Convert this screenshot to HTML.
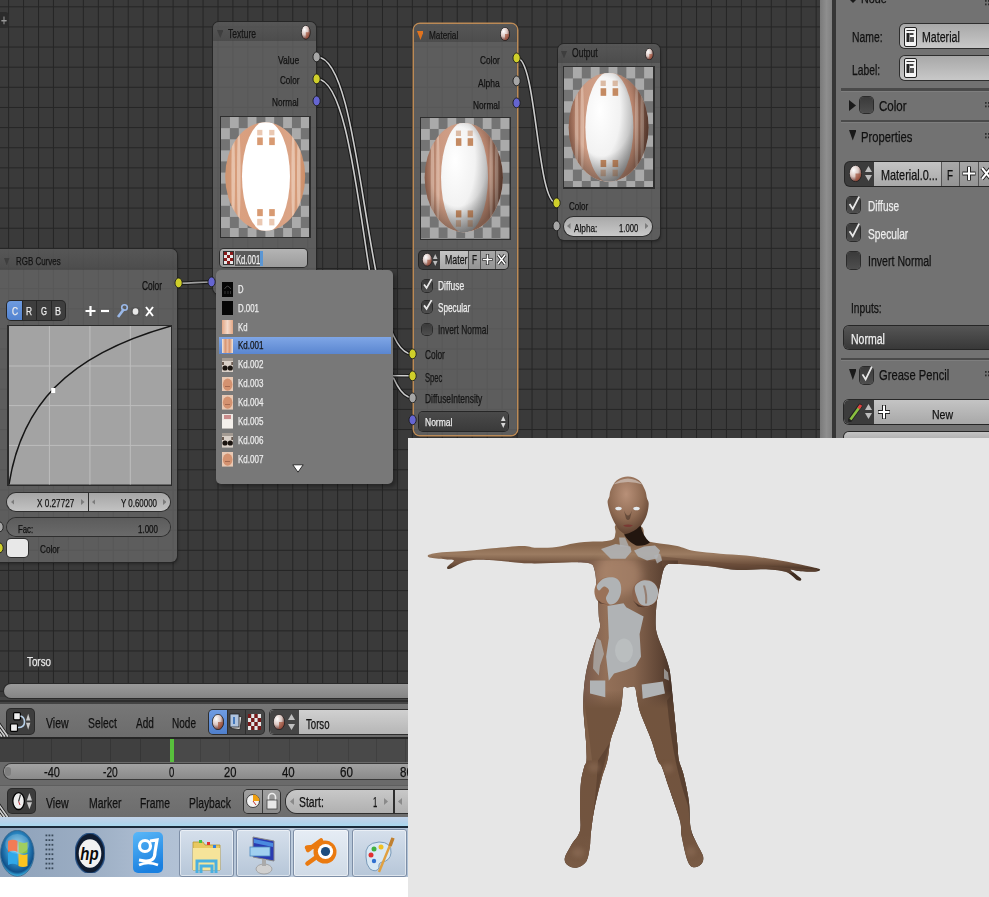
<!DOCTYPE html><html><head><meta charset="utf-8"><style>html,body{margin:0;padding:0}body{width:989px;height:897px;position:relative;overflow:hidden;background:#fff;font-family:"Liberation Sans",sans-serif}.a{position:absolute}.t{position:absolute;white-space:nowrap;transform-origin:0 0;-webkit-text-stroke:0.25px currentColor}</style></head><body>
<svg class="a" style="left:0px;top:0px;" width="830" height="701" viewBox="0 0 830 701"><rect width="830" height="701" fill="#3a3a3a"/><rect x="8.10" y="0" width="1.0" height="701" fill="#262626"/><rect x="23.05" y="0" width="1.0" height="701" fill="#262626"/><rect x="38.01" y="0" width="1.0" height="701" fill="#262626"/><rect x="52.96" y="0" width="1.0" height="701" fill="#262626"/><rect x="67.92" y="0" width="1.0" height="701" fill="#262626"/><rect x="82.88" y="0" width="1.0" height="701" fill="#262626"/><rect x="97.83" y="0" width="1.0" height="701" fill="#262626"/><rect x="112.78" y="0" width="1.0" height="701" fill="#262626"/><rect x="127.74" y="0" width="1.0" height="701" fill="#262626"/><rect x="142.70" y="0" width="1.0" height="701" fill="#262626"/><rect x="157.65" y="0" width="1.0" height="701" fill="#262626"/><rect x="172.61" y="0" width="1.0" height="701" fill="#262626"/><rect x="187.56" y="0" width="1.0" height="701" fill="#262626"/><rect x="202.52" y="0" width="1.0" height="701" fill="#262626"/><rect x="217.47" y="0" width="1.0" height="701" fill="#262626"/><rect x="232.43" y="0" width="1.0" height="701" fill="#262626"/><rect x="247.38" y="0" width="1.0" height="701" fill="#262626"/><rect x="262.34" y="0" width="1.0" height="701" fill="#262626"/><rect x="277.29" y="0" width="1.0" height="701" fill="#262626"/><rect x="292.25" y="0" width="1.0" height="701" fill="#262626"/><rect x="307.20" y="0" width="1.0" height="701" fill="#262626"/><rect x="322.16" y="0" width="1.0" height="701" fill="#262626"/><rect x="337.11" y="0" width="1.0" height="701" fill="#262626"/><rect x="352.06" y="0" width="1.0" height="701" fill="#262626"/><rect x="367.02" y="0" width="1.0" height="701" fill="#262626"/><rect x="381.97" y="0" width="1.0" height="701" fill="#262626"/><rect x="396.93" y="0" width="1.0" height="701" fill="#262626"/><rect x="411.88" y="0" width="1.0" height="701" fill="#262626"/><rect x="426.84" y="0" width="1.0" height="701" fill="#262626"/><rect x="441.79" y="0" width="1.0" height="701" fill="#262626"/><rect x="456.75" y="0" width="1.0" height="701" fill="#262626"/><rect x="471.70" y="0" width="1.0" height="701" fill="#262626"/><rect x="486.66" y="0" width="1.0" height="701" fill="#262626"/><rect x="501.61" y="0" width="1.0" height="701" fill="#262626"/><rect x="516.57" y="0" width="1.0" height="701" fill="#262626"/><rect x="531.52" y="0" width="1.0" height="701" fill="#262626"/><rect x="546.48" y="0" width="1.0" height="701" fill="#262626"/><rect x="561.43" y="0" width="1.0" height="701" fill="#262626"/><rect x="576.39" y="0" width="1.0" height="701" fill="#262626"/><rect x="591.35" y="0" width="1.0" height="701" fill="#262626"/><rect x="606.30" y="0" width="1.0" height="701" fill="#262626"/><rect x="621.26" y="0" width="1.0" height="701" fill="#262626"/><rect x="636.21" y="0" width="1.0" height="701" fill="#262626"/><rect x="651.17" y="0" width="1.0" height="701" fill="#262626"/><rect x="666.12" y="0" width="1.0" height="701" fill="#262626"/><rect x="681.08" y="0" width="1.0" height="701" fill="#262626"/><rect x="696.03" y="0" width="1.0" height="701" fill="#262626"/><rect x="710.99" y="0" width="1.0" height="701" fill="#262626"/><rect x="725.94" y="0" width="1.0" height="701" fill="#262626"/><rect x="740.90" y="0" width="1.0" height="701" fill="#262626"/><rect x="755.85" y="0" width="1.0" height="701" fill="#262626"/><rect x="770.81" y="0" width="1.0" height="701" fill="#262626"/><rect x="785.76" y="0" width="1.0" height="701" fill="#262626"/><rect x="800.72" y="0" width="1.0" height="701" fill="#262626"/><rect x="815.67" y="0" width="1.0" height="701" fill="#262626"/><rect x="0" y="6.30" width="830" height="1.0" fill="#262626"/><rect x="0" y="26.43" width="830" height="1.0" fill="#262626"/><rect x="0" y="46.56" width="830" height="1.0" fill="#262626"/><rect x="0" y="66.69" width="830" height="1.0" fill="#262626"/><rect x="0" y="86.82" width="830" height="1.0" fill="#262626"/><rect x="0" y="106.95" width="830" height="1.0" fill="#262626"/><rect x="0" y="127.08" width="830" height="1.0" fill="#262626"/><rect x="0" y="147.21" width="830" height="1.0" fill="#262626"/><rect x="0" y="167.34" width="830" height="1.0" fill="#262626"/><rect x="0" y="187.47" width="830" height="1.0" fill="#262626"/><rect x="0" y="207.60" width="830" height="1.0" fill="#262626"/><rect x="0" y="227.73" width="830" height="1.0" fill="#262626"/><rect x="0" y="247.86" width="830" height="1.0" fill="#262626"/><rect x="0" y="267.99" width="830" height="1.0" fill="#262626"/><rect x="0" y="288.12" width="830" height="1.0" fill="#262626"/><rect x="0" y="308.25" width="830" height="1.0" fill="#262626"/><rect x="0" y="328.38" width="830" height="1.0" fill="#262626"/><rect x="0" y="348.51" width="830" height="1.0" fill="#262626"/><rect x="0" y="368.64" width="830" height="1.0" fill="#262626"/><rect x="0" y="388.77" width="830" height="1.0" fill="#262626"/><rect x="0" y="408.90" width="830" height="1.0" fill="#262626"/><rect x="0" y="429.03" width="830" height="1.0" fill="#262626"/><rect x="0" y="449.16" width="830" height="1.0" fill="#262626"/><rect x="0" y="469.29" width="830" height="1.0" fill="#262626"/><rect x="0" y="489.42" width="830" height="1.0" fill="#262626"/><rect x="0" y="509.55" width="830" height="1.0" fill="#262626"/><rect x="0" y="529.68" width="830" height="1.0" fill="#262626"/><rect x="0" y="549.81" width="830" height="1.0" fill="#262626"/><rect x="0" y="569.94" width="830" height="1.0" fill="#262626"/><rect x="0" y="590.07" width="830" height="1.0" fill="#262626"/><rect x="0" y="610.20" width="830" height="1.0" fill="#262626"/><rect x="0" y="630.33" width="830" height="1.0" fill="#262626"/><rect x="0" y="650.46" width="830" height="1.0" fill="#262626"/><rect x="0" y="670.59" width="830" height="1.0" fill="#262626"/><rect x="0" y="690.72" width="830" height="1.0" fill="#262626"/></svg>
<div class="a" style="left:0px;top:12px;width:9px;height:16px;background:#2b2b2b;border-radius:0 4px 4px 0"></div>
<div class="t" style="left:1.00px;top:13.29px;font-size:14.53px;line-height:14.53px;color:#9a9a9a;transform:scaleX(0.7056);">+</div>
<svg class="a" style="left:0px;top:0px;" width="830" height="701" viewBox="0 0 830 701"><path d="M317,57 C364.5,57 364.5,354 412,354" stroke="#161616" stroke-width="3.8" fill="none" opacity="0.9"/><path d="M317,79 C364.5,79 364.5,397.5 412,397.5" stroke="#161616" stroke-width="3.8" fill="none" opacity="0.9"/><path d="M178.5,283.3 C195.25,283.3 195.25,282 212,282" stroke="#161616" stroke-width="3.8" fill="none" opacity="0.9"/><path d="M517,58 C536.7,58 536.7,203.3 556.4,203.3" stroke="#161616" stroke-width="3.8" fill="none" opacity="0.9"/><path d="M317,57 C364.5,57 364.5,354 412,354" stroke="#cccccc" stroke-width="1.6" fill="none"/><path d="M317,79 C364.5,79 364.5,397.5 412,397.5" stroke="#cccccc" stroke-width="1.6" fill="none"/><path d="M178.5,283.3 C195.25,283.3 195.25,282 212,282" stroke="#a0a0a0" stroke-width="1.6" fill="none"/><path d="M517,58 C536.7,58 536.7,203.3 556.4,203.3" stroke="#cccccc" stroke-width="1.6" fill="none"/><path d="M360,375.5 L412,375.7" stroke="#1e1e1e" stroke-width="3.4" fill="none"/><path d="M360,375.5 L412,375.7" stroke="#cfcfcf" stroke-width="1.6" fill="none"/></svg>
<div class="a" style="left:213px;top:22px;width:103px;height:272px;background:rgba(104,104,104,0.76);border-radius:6px;box-shadow:0 0 0 1px #262626,1px 2px 3px rgba(0,0,0,0.3)"></div>
<div class="a" style="left:213px;top:22px;width:103px;height:19px;background:linear-gradient(rgba(80,80,80,0.5),rgba(60,60,60,0.5));border-radius:6px 6px 0 0"></div>
<svg class="a" style="left:216.5px;top:29.5px;" width="6.5" height="8.0" viewBox="0 0 6.5 8.0"><polygon points="0,0 6.5,0 3.25,8.0" fill="#3e3e3e"/></svg>
<div class="t" style="left:228.00px;top:27.57px;font-size:12.79px;line-height:12.79px;color:#141414;transform:scaleX(0.6674);">Texture</div>
<svg class="a" style="left:301px;top:25.3px;" width="9.600000000000023" height="14.599999999999998" viewBox="0 0 9.600000000000023 14.599999999999998"><defs><radialGradient id="sg30125" cx="35%" cy="30%" r="70%"><stop offset="0" stop-color="#ffffff"/><stop offset="0.55" stop-color="#d9c5c0"/><stop offset="1" stop-color="#6d3a33"/></radialGradient></defs><ellipse cx="4.800000000000011" cy="7.299999999999999" rx="4.5000000000000115" ry="6.999999999999999" fill="url(#sg30125)" stroke="#222" stroke-width="0.8"/><path d="M4.800000000000011,7.299999999999999 L8.600000000000023,7.299999999999999 A3.8000000000000114,6.299999999999999 0 0 1 4.800000000000011,13.599999999999998 Z" fill="#a4553f" opacity="0.7"/></svg>
<div class="t" style="left:277.80px;top:53.75px;font-size:11.63px;line-height:11.63px;color:#111;transform:scaleX(0.7337);">Value</div>
<div class="t" style="left:279.60px;top:75.08px;font-size:11.48px;line-height:11.48px;color:#111;transform:scaleX(0.7069);">Color</div>
<div class="t" style="left:272.40px;top:97.48px;font-size:11.48px;line-height:11.48px;color:#111;transform:scaleX(0.7183);">Normal</div>
<div class="a" style="left:219.60000000000002px;top:115.5px;width:91.1px;height:122.7px;background:#2e2e2e"></div>
<svg class="a" style="left:220.8px;top:116.7px;" width="88.69999999999999" height="120.3" viewBox="0 0 88.69999999999999 120.3"><rect width="88.69999999999999" height="120.3" fill="#aaaaaa"/><rect x="0.00" y="0.00" width="8.92" height="11.15" fill="#747474"/><rect x="17.74" y="0.00" width="8.92" height="11.15" fill="#747474"/><rect x="35.48" y="0.00" width="8.92" height="11.15" fill="#747474"/><rect x="53.22" y="0.00" width="8.92" height="11.15" fill="#747474"/><rect x="70.96" y="0.00" width="8.92" height="11.15" fill="#747474"/><rect x="8.87" y="11.10" width="8.92" height="11.15" fill="#747474"/><rect x="26.61" y="11.10" width="8.92" height="11.15" fill="#747474"/><rect x="44.35" y="11.10" width="8.92" height="11.15" fill="#747474"/><rect x="62.09" y="11.10" width="8.92" height="11.15" fill="#747474"/><rect x="79.83" y="11.10" width="8.92" height="11.15" fill="#747474"/><rect x="0.00" y="22.20" width="8.92" height="11.15" fill="#747474"/><rect x="17.74" y="22.20" width="8.92" height="11.15" fill="#747474"/><rect x="35.48" y="22.20" width="8.92" height="11.15" fill="#747474"/><rect x="53.22" y="22.20" width="8.92" height="11.15" fill="#747474"/><rect x="70.96" y="22.20" width="8.92" height="11.15" fill="#747474"/><rect x="8.87" y="33.30" width="8.92" height="11.15" fill="#747474"/><rect x="26.61" y="33.30" width="8.92" height="11.15" fill="#747474"/><rect x="44.35" y="33.30" width="8.92" height="11.15" fill="#747474"/><rect x="62.09" y="33.30" width="8.92" height="11.15" fill="#747474"/><rect x="79.83" y="33.30" width="8.92" height="11.15" fill="#747474"/><rect x="0.00" y="44.40" width="8.92" height="11.15" fill="#747474"/><rect x="17.74" y="44.40" width="8.92" height="11.15" fill="#747474"/><rect x="35.48" y="44.40" width="8.92" height="11.15" fill="#747474"/><rect x="53.22" y="44.40" width="8.92" height="11.15" fill="#747474"/><rect x="70.96" y="44.40" width="8.92" height="11.15" fill="#747474"/><rect x="8.87" y="55.50" width="8.92" height="11.15" fill="#747474"/><rect x="26.61" y="55.50" width="8.92" height="11.15" fill="#747474"/><rect x="44.35" y="55.50" width="8.92" height="11.15" fill="#747474"/><rect x="62.09" y="55.50" width="8.92" height="11.15" fill="#747474"/><rect x="79.83" y="55.50" width="8.92" height="11.15" fill="#747474"/><rect x="0.00" y="66.60" width="8.92" height="11.15" fill="#747474"/><rect x="17.74" y="66.60" width="8.92" height="11.15" fill="#747474"/><rect x="35.48" y="66.60" width="8.92" height="11.15" fill="#747474"/><rect x="53.22" y="66.60" width="8.92" height="11.15" fill="#747474"/><rect x="70.96" y="66.60" width="8.92" height="11.15" fill="#747474"/><rect x="8.87" y="77.70" width="8.92" height="11.15" fill="#747474"/><rect x="26.61" y="77.70" width="8.92" height="11.15" fill="#747474"/><rect x="44.35" y="77.70" width="8.92" height="11.15" fill="#747474"/><rect x="62.09" y="77.70" width="8.92" height="11.15" fill="#747474"/><rect x="79.83" y="77.70" width="8.92" height="11.15" fill="#747474"/><rect x="0.00" y="88.80" width="8.92" height="11.15" fill="#747474"/><rect x="17.74" y="88.80" width="8.92" height="11.15" fill="#747474"/><rect x="35.48" y="88.80" width="8.92" height="11.15" fill="#747474"/><rect x="53.22" y="88.80" width="8.92" height="11.15" fill="#747474"/><rect x="70.96" y="88.80" width="8.92" height="11.15" fill="#747474"/><rect x="8.87" y="99.90" width="8.92" height="11.15" fill="#747474"/><rect x="26.61" y="99.90" width="8.92" height="11.15" fill="#747474"/><rect x="44.35" y="99.90" width="8.92" height="11.15" fill="#747474"/><rect x="62.09" y="99.90" width="8.92" height="11.15" fill="#747474"/><rect x="79.83" y="99.90" width="8.92" height="11.15" fill="#747474"/><rect x="0.00" y="111.00" width="8.92" height="11.15" fill="#747474"/><rect x="17.74" y="111.00" width="8.92" height="11.15" fill="#747474"/><rect x="35.48" y="111.00" width="8.92" height="11.15" fill="#747474"/><rect x="53.22" y="111.00" width="8.92" height="11.15" fill="#747474"/><rect x="70.96" y="111.00" width="8.92" height="11.15" fill="#747474"/><defs><clipPath id="cp220"><ellipse cx="44.19999999999999" cy="59.55" rx="40.0" ry="54.25"/></clipPath><linearGradient id="bp220" x1="0" x2="1" y1="0" y2="0"><stop offset="0" stop-color="#cf9470"/><stop offset="0.2" stop-color="#daa080"/><stop offset="0.5" stop-color="#d69c7c"/><stop offset="0.8" stop-color="#dba486"/><stop offset="1" stop-color="#cc8e68"/></linearGradient><radialGradient id="gp220" cx="30%" cy="35%" r="85%"><stop offset="0" stop-color="#ffffff"/><stop offset="0.5" stop-color="#f2f2f2"/><stop offset="1" stop-color="#9a9a9a"/></radialGradient><radialGradient id="ep220" cx="42%" cy="40%" r="60%"><stop offset="0.6" stop-color="#000" stop-opacity="0"/><stop offset="1" stop-color="#000" stop-opacity="0.35"/></radialGradient></defs><ellipse cx="44.19999999999999" cy="59.55" rx="40.0" ry="54.25" fill="url(#bp220)"/><g clip-path="url(#cp220)"><ellipse cx="12.199999999999989" cy="59.55" rx="1.7999999999999998" ry="49.910000000000004" fill="#f4dccc" opacity="0.6"/><ellipse cx="17.799999999999986" cy="59.55" rx="1.7999999999999998" ry="49.910000000000004" fill="#f4dccc" opacity="0.6"/><ellipse cx="72.19999999999999" cy="59.55" rx="1.7999999999999998" ry="49.910000000000004" fill="#f4dccc" opacity="0.6"/><ellipse cx="77.79999999999998" cy="59.55" rx="1.7999999999999998" ry="49.910000000000004" fill="#f4dccc" opacity="0.6"/><ellipse cx="44.999999999999986" cy="59.55" rx="24.0" ry="55.335" fill="#ffffff"/><rect x="36.20" y="12.89" width="5.20" height="5.43" fill="#d89a72" opacity="0.55"/><rect x="36.20" y="20.49" width="5.60" height="7.60" fill="#d89a72"/><rect x="36.20" y="92.10" width="5.60" height="7.05" fill="#d89a72"/><rect x="36.20" y="101.87" width="5.20" height="6.51" fill="#d89a72" opacity="0.55"/><rect x="48.20" y="12.89" width="5.20" height="5.43" fill="#d89a72" opacity="0.55"/><rect x="48.20" y="20.49" width="5.60" height="7.60" fill="#d89a72"/><rect x="48.20" y="92.10" width="5.60" height="7.05" fill="#d89a72"/><rect x="48.20" y="101.87" width="5.20" height="6.51" fill="#d89a72" opacity="0.55"/></g></svg>
<div class="a" style="left:220px;top:249px;width:87px;height:18px;background:linear-gradient(#b4b4b4,#9c9c9c);border-radius:4px;box-shadow:0 0 0 1px #2e2e2e"></div>
<div class="a" style="left:222.5px;top:251px;width:11px;height:14px;background:#e8e8e8;border:1px solid #333;box-sizing:border-box"></div>
<svg class="a" style="left:223.5px;top:252px;" width="9" height="12" viewBox="0 0 9 12"><rect x="0" y="0" width="3" height="3" fill="#8a1a1a"/><rect x="6" y="0" width="3" height="3" fill="#8a1a1a"/><rect x="3" y="3" width="3" height="3" fill="#8a1a1a"/><rect x="0" y="6" width="3" height="3" fill="#8a1a1a"/><rect x="6" y="6" width="3" height="3" fill="#8a1a1a"/><rect x="3" y="9" width="3" height="3" fill="#8a1a1a"/></svg>
<div class="a" style="left:235px;top:251px;width:25.5px;height:14.5px;background:#5a5a5a"></div>
<div class="a" style="left:260.4px;top:251px;width:2.6px;height:14.5px;background:#5a96d4"></div>
<div class="t" style="left:235.80px;top:252.52px;font-size:13.08px;line-height:13.08px;color:#f0f0f0;transform:scaleX(0.5860);">Kd.001</div>
<svg class="a" style="left:207.4px;top:276.1px;" width="9.2" height="11.8" viewBox="0 0 9.2 11.8"><ellipse cx="4.6" cy="5.9" rx="3.6" ry="4.9" fill="#6565d1" stroke="#1c1c1c" stroke-width="0.9"/></svg>
<svg class="a" style="left:312.0px;top:51.1px;" width="9.2" height="11.8" viewBox="0 0 9.2 11.8"><ellipse cx="4.6" cy="5.9" rx="3.6" ry="4.9" fill="#a6a6a6" stroke="#1c1c1c" stroke-width="0.9"/></svg>
<svg class="a" style="left:312.0px;top:72.8px;" width="9.2" height="11.8" viewBox="0 0 9.2 11.8"><ellipse cx="4.6" cy="5.9" rx="3.6" ry="4.9" fill="#cfcf2a" stroke="#1c1c1c" stroke-width="0.9"/></svg>
<svg class="a" style="left:312.0px;top:95.3px;" width="9.2" height="11.8" viewBox="0 0 9.2 11.8"><ellipse cx="4.6" cy="5.9" rx="3.6" ry="4.9" fill="#6565d1" stroke="#1c1c1c" stroke-width="0.9"/></svg>
<div class="a" style="left:413.5px;top:24.0px;width:103.0px;height:410.5px;background:rgba(104,104,104,0.76);border-radius:6px;box-shadow:0 0 0 1.5px #bb8a56,1px 2px 3px rgba(0,0,0,0.3)"></div>
<div class="a" style="left:413.5px;top:24.0px;width:103.0px;height:18.299999999999997px;background:linear-gradient(rgba(80,80,80,0.5),rgba(60,60,60,0.5));border-radius:6px 6px 0 0"></div>
<svg class="a" style="left:416.5px;top:30.5px;" width="6.899999999999977" height="9.0" viewBox="0 0 6.899999999999977 9.0"><polygon points="0,0 6.899999999999977,0 3.4499999999999886,9.0" fill="#e0731e"/></svg>
<div class="t" style="left:428.70px;top:29.58px;font-size:11.48px;line-height:11.48px;color:#141414;transform:scaleX(0.7178);">Material</div>
<svg class="a" style="left:500px;top:26.5px;" width="10" height="14.0" viewBox="0 0 10 14.0"><defs><radialGradient id="sg50026" cx="35%" cy="30%" r="70%"><stop offset="0" stop-color="#ffffff"/><stop offset="0.55" stop-color="#d9c5c0"/><stop offset="1" stop-color="#6d3a33"/></radialGradient></defs><ellipse cx="5.0" cy="7.0" rx="4.7" ry="6.7" fill="url(#sg50026)" stroke="#222" stroke-width="0.8"/><path d="M5.0,7.0 L9,7.0 A4.0,6.0 0 0 1 5.0,13.0 Z" fill="#a4553f" opacity="0.7"/></svg>
<div class="t" style="left:479.60px;top:55.19px;font-size:10.76px;line-height:10.76px;color:#111;transform:scaleX(0.7702);">Color</div>
<div class="t" style="left:477.60px;top:77.52px;font-size:11.19px;line-height:11.19px;color:#111;transform:scaleX(0.7609);">Alpha</div>
<div class="t" style="left:472.60px;top:99.85px;font-size:11.05px;line-height:11.05px;color:#111;transform:scaleX(0.7523);">Normal</div>
<div class="a" style="left:420.2px;top:117.1px;width:90.60000000000005px;height:123.40000000000002px;background:#2e2e2e"></div>
<svg class="a" style="left:421.4px;top:118.3px;" width="88.20000000000005" height="121.00000000000001" viewBox="0 0 88.20000000000005 121.00000000000001"><rect width="88.20000000000005" height="121.00000000000001" fill="#aaaaaa"/><rect x="0.00" y="0.00" width="8.87" height="11.00" fill="#747474"/><rect x="17.64" y="0.00" width="8.87" height="11.00" fill="#747474"/><rect x="35.28" y="0.00" width="8.87" height="11.00" fill="#747474"/><rect x="52.92" y="0.00" width="8.87" height="11.00" fill="#747474"/><rect x="70.56" y="0.00" width="8.87" height="11.00" fill="#747474"/><rect x="88.20" y="0.00" width="8.87" height="11.00" fill="#747474"/><rect x="8.82" y="10.95" width="8.87" height="11.00" fill="#747474"/><rect x="26.46" y="10.95" width="8.87" height="11.00" fill="#747474"/><rect x="44.10" y="10.95" width="8.87" height="11.00" fill="#747474"/><rect x="61.74" y="10.95" width="8.87" height="11.00" fill="#747474"/><rect x="79.38" y="10.95" width="8.87" height="11.00" fill="#747474"/><rect x="0.00" y="21.90" width="8.87" height="11.00" fill="#747474"/><rect x="17.64" y="21.90" width="8.87" height="11.00" fill="#747474"/><rect x="35.28" y="21.90" width="8.87" height="11.00" fill="#747474"/><rect x="52.92" y="21.90" width="8.87" height="11.00" fill="#747474"/><rect x="70.56" y="21.90" width="8.87" height="11.00" fill="#747474"/><rect x="88.20" y="21.90" width="8.87" height="11.00" fill="#747474"/><rect x="8.82" y="32.85" width="8.87" height="11.00" fill="#747474"/><rect x="26.46" y="32.85" width="8.87" height="11.00" fill="#747474"/><rect x="44.10" y="32.85" width="8.87" height="11.00" fill="#747474"/><rect x="61.74" y="32.85" width="8.87" height="11.00" fill="#747474"/><rect x="79.38" y="32.85" width="8.87" height="11.00" fill="#747474"/><rect x="0.00" y="43.80" width="8.87" height="11.00" fill="#747474"/><rect x="17.64" y="43.80" width="8.87" height="11.00" fill="#747474"/><rect x="35.28" y="43.80" width="8.87" height="11.00" fill="#747474"/><rect x="52.92" y="43.80" width="8.87" height="11.00" fill="#747474"/><rect x="70.56" y="43.80" width="8.87" height="11.00" fill="#747474"/><rect x="88.20" y="43.80" width="8.87" height="11.00" fill="#747474"/><rect x="8.82" y="54.75" width="8.87" height="11.00" fill="#747474"/><rect x="26.46" y="54.75" width="8.87" height="11.00" fill="#747474"/><rect x="44.10" y="54.75" width="8.87" height="11.00" fill="#747474"/><rect x="61.74" y="54.75" width="8.87" height="11.00" fill="#747474"/><rect x="79.38" y="54.75" width="8.87" height="11.00" fill="#747474"/><rect x="0.00" y="65.70" width="8.87" height="11.00" fill="#747474"/><rect x="17.64" y="65.70" width="8.87" height="11.00" fill="#747474"/><rect x="35.28" y="65.70" width="8.87" height="11.00" fill="#747474"/><rect x="52.92" y="65.70" width="8.87" height="11.00" fill="#747474"/><rect x="70.56" y="65.70" width="8.87" height="11.00" fill="#747474"/><rect x="88.20" y="65.70" width="8.87" height="11.00" fill="#747474"/><rect x="8.82" y="76.65" width="8.87" height="11.00" fill="#747474"/><rect x="26.46" y="76.65" width="8.87" height="11.00" fill="#747474"/><rect x="44.10" y="76.65" width="8.87" height="11.00" fill="#747474"/><rect x="61.74" y="76.65" width="8.87" height="11.00" fill="#747474"/><rect x="79.38" y="76.65" width="8.87" height="11.00" fill="#747474"/><rect x="0.00" y="87.60" width="8.87" height="11.00" fill="#747474"/><rect x="17.64" y="87.60" width="8.87" height="11.00" fill="#747474"/><rect x="35.28" y="87.60" width="8.87" height="11.00" fill="#747474"/><rect x="52.92" y="87.60" width="8.87" height="11.00" fill="#747474"/><rect x="70.56" y="87.60" width="8.87" height="11.00" fill="#747474"/><rect x="88.20" y="87.60" width="8.87" height="11.00" fill="#747474"/><rect x="8.82" y="98.55" width="8.87" height="11.00" fill="#747474"/><rect x="26.46" y="98.55" width="8.87" height="11.00" fill="#747474"/><rect x="44.10" y="98.55" width="8.87" height="11.00" fill="#747474"/><rect x="61.74" y="98.55" width="8.87" height="11.00" fill="#747474"/><rect x="79.38" y="98.55" width="8.87" height="11.00" fill="#747474"/><rect x="0.00" y="109.50" width="8.87" height="11.00" fill="#747474"/><rect x="17.64" y="109.50" width="8.87" height="11.00" fill="#747474"/><rect x="35.28" y="109.50" width="8.87" height="11.00" fill="#747474"/><rect x="52.92" y="109.50" width="8.87" height="11.00" fill="#747474"/><rect x="70.56" y="109.50" width="8.87" height="11.00" fill="#747474"/><rect x="88.20" y="109.50" width="8.87" height="11.00" fill="#747474"/><rect x="8.82" y="120.45" width="8.87" height="11.00" fill="#747474"/><rect x="26.46" y="120.45" width="8.87" height="11.00" fill="#747474"/><rect x="44.10" y="120.45" width="8.87" height="11.00" fill="#747474"/><rect x="61.74" y="120.45" width="8.87" height="11.00" fill="#747474"/><rect x="79.38" y="120.45" width="8.87" height="11.00" fill="#747474"/><defs><clipPath id="cp421"><ellipse cx="42.75" cy="59.55" rx="39.150000000000006" ry="54.65"/></clipPath><linearGradient id="bp421" x1="0" x2="1" y1="0" y2="0"><stop offset="0" stop-color="#946450"/><stop offset="0.2" stop-color="#cc9a82"/><stop offset="0.5" stop-color="#d4a48c"/><stop offset="0.8" stop-color="#c08a72"/><stop offset="1" stop-color="#7a5040"/></linearGradient><radialGradient id="gp421" cx="30%" cy="35%" r="85%"><stop offset="0" stop-color="#ffffff"/><stop offset="0.5" stop-color="#f2f2f2"/><stop offset="1" stop-color="#9a9a9a"/></radialGradient><radialGradient id="ep421" cx="42%" cy="40%" r="60%"><stop offset="0.6" stop-color="#000" stop-opacity="0"/><stop offset="1" stop-color="#000" stop-opacity="0.35"/></radialGradient></defs><ellipse cx="42.75" cy="59.55" rx="39.150000000000006" ry="54.65" fill="url(#bp421)"/><g clip-path="url(#cp421)"><ellipse cx="11.429999999999993" cy="59.55" rx="1.7617500000000001" ry="50.278" fill="#f4dccc" opacity="0.45"/><ellipse cx="16.910999999999994" cy="59.55" rx="1.7617500000000001" ry="50.278" fill="#f4dccc" opacity="0.45"/><ellipse cx="70.155" cy="59.55" rx="1.7617500000000001" ry="50.278" fill="#f4dccc" opacity="0.45"/><ellipse cx="75.636" cy="59.55" rx="1.7617500000000001" ry="50.278" fill="#f4dccc" opacity="0.45"/><ellipse cx="43.533" cy="59.55" rx="23.490000000000002" ry="55.743" fill="url(#gp421)"/><rect x="34.92" y="12.55" width="5.09" height="5.46" fill="#c48a62" opacity="0.55"/><rect x="34.92" y="20.20" width="5.48" height="7.65" fill="#c48a62"/><rect x="34.92" y="92.34" width="5.48" height="7.10" fill="#c48a62"/><rect x="34.92" y="102.18" width="5.09" height="6.56" fill="#c48a62" opacity="0.55"/><rect x="46.66" y="12.55" width="5.09" height="5.46" fill="#c48a62" opacity="0.55"/><rect x="46.66" y="20.20" width="5.48" height="7.65" fill="#c48a62"/><rect x="46.66" y="92.34" width="5.48" height="7.10" fill="#c48a62"/><rect x="46.66" y="102.18" width="5.09" height="6.56" fill="#c48a62" opacity="0.55"/><ellipse cx="42.75" cy="59.55" rx="39.150000000000006" ry="54.65" fill="url(#ep421)"/></g></svg>
<div class="a" style="left:419.2px;top:251px;width:89px;height:17.6px;background:#3c3c3c;border-radius:4px;box-shadow:0 0 0 1px #262626"></div>
<svg class="a" style="left:421.5px;top:253px;" width="10.5" height="13.5" viewBox="0 0 10.5 13.5"><defs><radialGradient id="sg421253" cx="35%" cy="30%" r="70%"><stop offset="0" stop-color="#ffffff"/><stop offset="0.55" stop-color="#d9c5c0"/><stop offset="1" stop-color="#6d3a33"/></radialGradient></defs><ellipse cx="5.25" cy="6.75" rx="4.95" ry="6.45" fill="url(#sg421253)" stroke="#222" stroke-width="0.8"/><path d="M5.25,6.75 L9.5,6.75 A4.25,5.75 0 0 1 5.25,12.5 Z" fill="#a4553f" opacity="0.7"/></svg>
<svg class="a" style="left:433.25px;top:254.0px;" width="4.5" height="5" viewBox="0 0 4.5 5"><polygon points="0,5 4.5,5 2.25,0" fill="#bdbdbd"/></svg>
<svg class="a" style="left:433.25px;top:260.5px;" width="4.5" height="5" viewBox="0 0 4.5 5"><polygon points="0,0 4.5,0 2.25,5" fill="#bdbdbd"/></svg>
<div class="a" style="left:440px;top:251px;width:28px;height:17.6px;background:linear-gradient(#c4c4c4,#a8a8a8)"></div>
<div class="t" style="left:444.50px;top:254.14px;font-size:12.35px;line-height:12.35px;color:#161616;transform:scaleX(0.7128);">Mater</div>
<div class="a" style="left:468px;top:251px;width:11.6px;height:17.6px;background:linear-gradient(#a8a8a8,#949494);border-left:1px solid #555;box-sizing:border-box"></div>
<div class="t" style="left:471.50px;top:254.14px;font-size:12.35px;line-height:12.35px;color:#161616;transform:scaleX(0.6635);">F</div>
<div class="a" style="left:479.6px;top:251px;width:15.2px;height:17.6px;background:linear-gradient(#a8a8a8,#949494);border-left:1px solid #555;box-sizing:border-box"></div>
<div class="a" style="left:494.8px;top:251px;width:13.4px;height:17.6px;background:linear-gradient(#a8a8a8,#949494);border-left:1px solid #555;border-radius:0 4px 4px 0;box-sizing:border-box"></div>
<svg class="a" style="left:481px;top:252px;" width="13" height="15" viewBox="0 0 13 15"><path d="M6.5,2 V13 M1.5,7.5 H11.5" stroke="#222" stroke-width="3.2"/><path d="M6.5,2.5 V12.5 M2,7.5 H11" stroke="#fff" stroke-width="1.6"/></svg>
<svg class="a" style="left:496px;top:252px;" width="11" height="15" viewBox="0 0 11 15"><path d="M2,3 L9,12 M9,3 L2,12" stroke="#222" stroke-width="3.2"/><path d="M2,3 L9,12 M9,3 L2,12" stroke="#fff" stroke-width="1.6"/></svg>
<div class="a" style="left:421.5px;top:280.3px;width:10.100000000000023px;height:11.699999999999989px;background:linear-gradient(#3a3a3a,#4e4e4e);border-radius:4px;box-shadow:0 0 0 1px #2a2a2a"></div>
<svg class="a" style="left:421.5px;top:278.3px;" width="12.100000000000023" height="13.699999999999989" viewBox="0 0 12.100000000000023 13.699999999999989"><path d="M2.0200000000000045,6.434999999999994 L4.545000000000011,9.94499999999999 L9.595000000000022,1.1699999999999988" stroke="#e8e8e8" stroke-width="1.8" fill="none"/></svg>
<div class="t" style="left:437.50px;top:281.41px;font-size:11.92px;line-height:11.92px;color:#ececec;transform:scaleX(0.7103);">Diffuse</div>
<div class="a" style="left:421.5px;top:301.4px;width:10.100000000000023px;height:11.600000000000023px;background:linear-gradient(#3a3a3a,#4e4e4e);border-radius:4px;box-shadow:0 0 0 1px #2a2a2a"></div>
<svg class="a" style="left:421.5px;top:299.4px;" width="12.100000000000023" height="13.600000000000023" viewBox="0 0 12.100000000000023 13.600000000000023"><path d="M2.0200000000000045,6.380000000000013 L4.545000000000011,9.860000000000019 L9.595000000000022,1.1600000000000024" stroke="#e8e8e8" stroke-width="1.8" fill="none"/></svg>
<div class="t" style="left:437.50px;top:302.51px;font-size:11.92px;line-height:11.92px;color:#ececec;transform:scaleX(0.6870);">Specular</div>
<div class="a" style="left:421.5px;top:323.7px;width:10.100000000000023px;height:11.699999999999989px;background:linear-gradient(#3a3a3a,#4e4e4e);border-radius:4px;box-shadow:0 0 0 1px #2a2a2a"></div>
<div class="t" style="left:437.50px;top:324.71px;font-size:11.92px;line-height:11.92px;color:#161616;transform:scaleX(0.7034);">Invert Normal</div>
<div class="t" style="left:424.60px;top:350.01px;font-size:11.92px;line-height:11.92px;color:#161616;transform:scaleX(0.6986);">Color</div>
<div class="t" style="left:424.60px;top:371.02px;font-size:13.08px;line-height:13.08px;color:#161616;transform:scaleX(0.5834);">Spec</div>
<div class="t" style="left:424.60px;top:392.89px;font-size:12.06px;line-height:12.06px;color:#161616;transform:scaleX(0.6977);">DiffuseIntensity</div>
<div class="a" style="left:419.2px;top:412.2px;width:89px;height:18.8px;background:linear-gradient(#4a4a4a,#3a3a3a);border-radius:4px;box-shadow:0 0 0 1px #262626"></div>
<div class="t" style="left:424.60px;top:416.25px;font-size:11.63px;line-height:11.63px;color:#ececec;transform:scaleX(0.7307);">Normal</div>
<svg class="a" style="left:501.25px;top:415.5px;" width="4.5" height="5" viewBox="0 0 4.5 5"><polygon points="0,5 4.5,5 2.25,0" fill="#d8d8d8"/></svg>
<svg class="a" style="left:501.25px;top:423.0px;" width="4.5" height="5" viewBox="0 0 4.5 5"><polygon points="0,0 4.5,0 2.25,5" fill="#d8d8d8"/></svg>
<svg class="a" style="left:407.59999999999997px;top:348.1px;" width="9.2" height="11.8" viewBox="0 0 9.2 11.8"><ellipse cx="4.6" cy="5.9" rx="3.6" ry="4.9" fill="#cfcf2a" stroke="#1c1c1c" stroke-width="0.9"/></svg>
<svg class="a" style="left:407.59999999999997px;top:369.70000000000005px;" width="9.2" height="11.8" viewBox="0 0 9.2 11.8"><ellipse cx="4.6" cy="5.9" rx="3.6" ry="4.9" fill="#cfcf2a" stroke="#1c1c1c" stroke-width="0.9"/></svg>
<svg class="a" style="left:407.59999999999997px;top:391.5px;" width="9.2" height="11.8" viewBox="0 0 9.2 11.8"><ellipse cx="4.6" cy="5.9" rx="3.6" ry="4.9" fill="#a6a6a6" stroke="#1c1c1c" stroke-width="0.9"/></svg>
<svg class="a" style="left:407.59999999999997px;top:414.1px;" width="9.2" height="11.8" viewBox="0 0 9.2 11.8"><ellipse cx="4.6" cy="5.9" rx="3.6" ry="4.9" fill="#6565d1" stroke="#1c1c1c" stroke-width="0.9"/></svg>
<svg class="a" style="left:512.4px;top:52.1px;" width="9.2" height="11.8" viewBox="0 0 9.2 11.8"><ellipse cx="4.6" cy="5.9" rx="3.6" ry="4.9" fill="#cfcf2a" stroke="#1c1c1c" stroke-width="0.9"/></svg>
<svg class="a" style="left:512.4px;top:75.1px;" width="9.2" height="11.8" viewBox="0 0 9.2 11.8"><ellipse cx="4.6" cy="5.9" rx="3.6" ry="4.9" fill="#a6a6a6" stroke="#1c1c1c" stroke-width="0.9"/></svg>
<svg class="a" style="left:512.4px;top:97.1px;" width="9.2" height="11.8" viewBox="0 0 9.2 11.8"><ellipse cx="4.6" cy="5.9" rx="3.6" ry="4.9" fill="#6565d1" stroke="#1c1c1c" stroke-width="0.9"/></svg>
<div class="a" style="left:557.5px;top:44px;width:102.5px;height:196px;background:rgba(104,104,104,0.76);border-radius:6px;box-shadow:0 0 0 1px #262626,1px 2px 3px rgba(0,0,0,0.3)"></div>
<div class="a" style="left:557.5px;top:44px;width:102.5px;height:19px;background:linear-gradient(rgba(80,80,80,0.5),rgba(60,60,60,0.5));border-radius:6px 6px 0 0"></div>
<svg class="a" style="left:561px;top:50.5px;" width="6" height="7.5" viewBox="0 0 6 7.5"><polygon points="0,0 6,0 3.0,7.5" fill="#3e3e3e"/></svg>
<div class="t" style="left:572.30px;top:48.31px;font-size:11.92px;line-height:11.92px;color:#141414;transform:scaleX(0.7188);">Output</div>
<svg class="a" style="left:645px;top:47.7px;" width="8.600000000000023" height="12.199999999999996" viewBox="0 0 8.600000000000023 12.199999999999996"><defs><radialGradient id="sg64547" cx="35%" cy="30%" r="70%"><stop offset="0" stop-color="#ffffff"/><stop offset="0.55" stop-color="#d9c5c0"/><stop offset="1" stop-color="#6d3a33"/></radialGradient></defs><ellipse cx="4.300000000000011" cy="6.099999999999998" rx="4.0000000000000115" ry="5.799999999999998" fill="url(#sg64547)" stroke="#222" stroke-width="0.8"/><path d="M4.300000000000011,6.099999999999998 L7.600000000000023,6.099999999999998 A3.3000000000000114,5.099999999999998 0 0 1 4.300000000000011,11.199999999999996 Z" fill="#a4553f" opacity="0.7"/></svg>
<div class="a" style="left:563.1999999999999px;top:66.1px;width:91.4px;height:122.60000000000001px;background:#2e2e2e"></div>
<svg class="a" style="left:564.4px;top:67.3px;" width="89.0" height="120.2" viewBox="0 0 89.0 120.2"><rect width="89.0" height="120.2" fill="#aaaaaa"/><rect x="0.00" y="0.00" width="8.95" height="11.45" fill="#747474"/><rect x="17.80" y="0.00" width="8.95" height="11.45" fill="#747474"/><rect x="35.60" y="0.00" width="8.95" height="11.45" fill="#747474"/><rect x="53.40" y="0.00" width="8.95" height="11.45" fill="#747474"/><rect x="71.20" y="0.00" width="8.95" height="11.45" fill="#747474"/><rect x="8.90" y="11.40" width="8.95" height="11.45" fill="#747474"/><rect x="26.70" y="11.40" width="8.95" height="11.45" fill="#747474"/><rect x="44.50" y="11.40" width="8.95" height="11.45" fill="#747474"/><rect x="62.30" y="11.40" width="8.95" height="11.45" fill="#747474"/><rect x="80.10" y="11.40" width="8.95" height="11.45" fill="#747474"/><rect x="0.00" y="22.80" width="8.95" height="11.45" fill="#747474"/><rect x="17.80" y="22.80" width="8.95" height="11.45" fill="#747474"/><rect x="35.60" y="22.80" width="8.95" height="11.45" fill="#747474"/><rect x="53.40" y="22.80" width="8.95" height="11.45" fill="#747474"/><rect x="71.20" y="22.80" width="8.95" height="11.45" fill="#747474"/><rect x="8.90" y="34.20" width="8.95" height="11.45" fill="#747474"/><rect x="26.70" y="34.20" width="8.95" height="11.45" fill="#747474"/><rect x="44.50" y="34.20" width="8.95" height="11.45" fill="#747474"/><rect x="62.30" y="34.20" width="8.95" height="11.45" fill="#747474"/><rect x="80.10" y="34.20" width="8.95" height="11.45" fill="#747474"/><rect x="0.00" y="45.60" width="8.95" height="11.45" fill="#747474"/><rect x="17.80" y="45.60" width="8.95" height="11.45" fill="#747474"/><rect x="35.60" y="45.60" width="8.95" height="11.45" fill="#747474"/><rect x="53.40" y="45.60" width="8.95" height="11.45" fill="#747474"/><rect x="71.20" y="45.60" width="8.95" height="11.45" fill="#747474"/><rect x="8.90" y="57.00" width="8.95" height="11.45" fill="#747474"/><rect x="26.70" y="57.00" width="8.95" height="11.45" fill="#747474"/><rect x="44.50" y="57.00" width="8.95" height="11.45" fill="#747474"/><rect x="62.30" y="57.00" width="8.95" height="11.45" fill="#747474"/><rect x="80.10" y="57.00" width="8.95" height="11.45" fill="#747474"/><rect x="0.00" y="68.40" width="8.95" height="11.45" fill="#747474"/><rect x="17.80" y="68.40" width="8.95" height="11.45" fill="#747474"/><rect x="35.60" y="68.40" width="8.95" height="11.45" fill="#747474"/><rect x="53.40" y="68.40" width="8.95" height="11.45" fill="#747474"/><rect x="71.20" y="68.40" width="8.95" height="11.45" fill="#747474"/><rect x="8.90" y="79.80" width="8.95" height="11.45" fill="#747474"/><rect x="26.70" y="79.80" width="8.95" height="11.45" fill="#747474"/><rect x="44.50" y="79.80" width="8.95" height="11.45" fill="#747474"/><rect x="62.30" y="79.80" width="8.95" height="11.45" fill="#747474"/><rect x="80.10" y="79.80" width="8.95" height="11.45" fill="#747474"/><rect x="0.00" y="91.20" width="8.95" height="11.45" fill="#747474"/><rect x="17.80" y="91.20" width="8.95" height="11.45" fill="#747474"/><rect x="35.60" y="91.20" width="8.95" height="11.45" fill="#747474"/><rect x="53.40" y="91.20" width="8.95" height="11.45" fill="#747474"/><rect x="71.20" y="91.20" width="8.95" height="11.45" fill="#747474"/><rect x="8.90" y="102.60" width="8.95" height="11.45" fill="#747474"/><rect x="26.70" y="102.60" width="8.95" height="11.45" fill="#747474"/><rect x="44.50" y="102.60" width="8.95" height="11.45" fill="#747474"/><rect x="62.30" y="102.60" width="8.95" height="11.45" fill="#747474"/><rect x="80.10" y="102.60" width="8.95" height="11.45" fill="#747474"/><rect x="0.00" y="114.00" width="8.95" height="11.45" fill="#747474"/><rect x="17.80" y="114.00" width="8.95" height="11.45" fill="#747474"/><rect x="35.60" y="114.00" width="8.95" height="11.45" fill="#747474"/><rect x="53.40" y="114.00" width="8.95" height="11.45" fill="#747474"/><rect x="71.20" y="114.00" width="8.95" height="11.45" fill="#747474"/><defs><clipPath id="cp564"><ellipse cx="44.60000000000002" cy="60.35000000000001" rx="40.0" ry="54.35"/></clipPath><linearGradient id="bp564" x1="0" x2="1" y1="0" y2="0"><stop offset="0" stop-color="#946450"/><stop offset="0.2" stop-color="#cc9a82"/><stop offset="0.5" stop-color="#d4a48c"/><stop offset="0.8" stop-color="#c08a72"/><stop offset="1" stop-color="#7a5040"/></linearGradient><radialGradient id="gp564" cx="30%" cy="35%" r="85%"><stop offset="0" stop-color="#ffffff"/><stop offset="0.5" stop-color="#f2f2f2"/><stop offset="1" stop-color="#9a9a9a"/></radialGradient><radialGradient id="ep564" cx="42%" cy="40%" r="60%"><stop offset="0.6" stop-color="#000" stop-opacity="0"/><stop offset="1" stop-color="#000" stop-opacity="0.35"/></radialGradient></defs><ellipse cx="44.60000000000002" cy="60.35000000000001" rx="40.0" ry="54.35" fill="url(#bp564)"/><g clip-path="url(#cp564)"><ellipse cx="12.600000000000023" cy="60.35000000000001" rx="1.7999999999999998" ry="50.002" fill="#f4dccc" opacity="0.45"/><ellipse cx="18.20000000000002" cy="60.35000000000001" rx="1.7999999999999998" ry="50.002" fill="#f4dccc" opacity="0.45"/><ellipse cx="72.60000000000002" cy="60.35000000000001" rx="1.7999999999999998" ry="50.002" fill="#f4dccc" opacity="0.45"/><ellipse cx="78.20000000000002" cy="60.35000000000001" rx="1.7999999999999998" ry="50.002" fill="#f4dccc" opacity="0.45"/><ellipse cx="45.40000000000002" cy="60.35000000000001" rx="24.0" ry="55.437000000000005" fill="url(#gp564)"/><rect x="36.60" y="13.61" width="5.20" height="5.44" fill="#c48a62" opacity="0.55"/><rect x="36.60" y="21.22" width="5.60" height="7.61" fill="#c48a62"/><rect x="36.60" y="92.96" width="5.60" height="7.07" fill="#c48a62"/><rect x="36.60" y="102.74" width="5.20" height="6.52" fill="#c48a62" opacity="0.55"/><rect x="48.60" y="13.61" width="5.20" height="5.44" fill="#c48a62" opacity="0.55"/><rect x="48.60" y="21.22" width="5.60" height="7.61" fill="#c48a62"/><rect x="48.60" y="92.96" width="5.60" height="7.07" fill="#c48a62"/><rect x="48.60" y="102.74" width="5.20" height="6.52" fill="#c48a62" opacity="0.55"/><ellipse cx="44.60000000000002" cy="60.35000000000001" rx="40.0" ry="54.35" fill="url(#ep564)"/></g></svg>
<div class="t" style="left:568.80px;top:201.02px;font-size:11.19px;line-height:11.19px;color:#111;transform:scaleX(0.7178);">Color</div>
<div class="a" style="left:563.7px;top:217px;width:88.3px;height:18.7px;background:linear-gradient(#a9a9a9,#c9c9c9);border-radius:9.5px;box-shadow:0 0 0 1px #2e2e2e"></div>
<div class="t" style="left:573.80px;top:221.75px;font-size:11.63px;line-height:11.63px;color:#111;transform:scaleX(0.7098);">Alpha:</div>
<div class="t" style="left:618.80px;top:221.75px;font-size:11.63px;line-height:11.63px;color:#111;transform:scaleX(0.6592);">1.000</div>
<svg class="a" style="left:567.25px;top:223.3px;" width="3.5" height="6" viewBox="0 0 3.5 6"><polygon points="3.5,0 3.5,6 0,3.0" fill="#7c7c7c"/></svg>
<svg class="a" style="left:644.95px;top:223.3px;" width="3.5" height="6" viewBox="0 0 3.5 6"><polygon points="0,0 0,6 3.5,3.0" fill="#7c7c7c"/></svg>
<svg class="a" style="left:551.8px;top:197.4px;" width="9.2" height="11.8" viewBox="0 0 9.2 11.8"><ellipse cx="4.6" cy="5.9" rx="3.6" ry="4.9" fill="#cfcf2a" stroke="#1c1c1c" stroke-width="0.9"/></svg>
<svg class="a" style="left:551.8px;top:219.7px;" width="9.2" height="11.8" viewBox="0 0 9.2 11.8"><ellipse cx="4.6" cy="5.9" rx="3.6" ry="4.9" fill="#a6a6a6" stroke="#1c1c1c" stroke-width="0.9"/></svg>
<div class="a" style="left:-9px;top:249px;width:186px;height:313px;background:rgba(104,104,104,0.76);border-radius:6px;box-shadow:0 0 0 1px #262626,1px 2px 3px rgba(0,0,0,0.3)"></div>
<div class="a" style="left:-9px;top:249px;width:186px;height:20.600000000000023px;background:linear-gradient(rgba(80,80,80,0.5),rgba(60,60,60,0.5));border-radius:6px 6px 0 0"></div>
<svg class="a" style="left:4px;top:257.5px;" width="5.5" height="7.5" viewBox="0 0 5.5 7.5"><polygon points="0,0 5.5,0 2.75,7.5" fill="#3e3e3e"/></svg>
<div class="t" style="left:16.40px;top:256.25px;font-size:11.05px;line-height:11.05px;color:#141414;transform:scaleX(0.7197);">RGB Curves</div>
<div class="t" style="left:142.00px;top:281.01px;font-size:11.92px;line-height:11.92px;color:#111;transform:scaleX(0.7021);">Color</div>
<div class="a" style="left:7.3px;top:301.4px;width:58.2px;height:18.2px;background:#3e3e3e;border-radius:4px;box-shadow:0 0 0 1px #262626"></div>
<div class="a" style="left:7.3px;top:301.4px;width:14.3px;height:18.2px;background:linear-gradient(#6e9be0,#5283d0);border-radius:4px 0 0 4px"></div>
<div class="a" style="left:21.85px;top:301.4px;width:1px;height:18.2px;background:#262626"></div>
<div class="a" style="left:36.4px;top:301.4px;width:1px;height:18.2px;background:#262626"></div>
<div class="a" style="left:50.95px;top:301.4px;width:1px;height:18.2px;background:#262626"></div>
<div class="t" style="left:11.57px;top:305.25px;font-size:11.63px;line-height:11.63px;color:#ececec;transform:scaleX(0.7167);">C</div>
<div class="t" style="left:26.12px;top:305.25px;font-size:11.63px;line-height:11.63px;color:#ececec;transform:scaleX(0.7167);">R</div>
<div class="t" style="left:40.67px;top:305.25px;font-size:11.63px;line-height:11.63px;color:#ececec;transform:scaleX(0.6615);">G</div>
<div class="t" style="left:55.22px;top:305.25px;font-size:11.63px;line-height:11.63px;color:#ececec;transform:scaleX(0.7759);">B</div>
<svg class="a" style="left:84px;top:302px;" width="72" height="17" viewBox="0 0 72 17"><path d="M6.5,4 V14 M1.5,9 H11.5" stroke="#fff" stroke-width="2.2"/><path d="M17,9 H25" stroke="#fff" stroke-width="2.2"/><path d="M34,15 L40,7" stroke="#9ab8e8" stroke-width="2.6"/><circle cx="40.5" cy="5.5" r="2.8" fill="none" stroke="#9ab8e8" stroke-width="1.6"/><rect x="47" y="5" width="9" height="9" rx="2" fill="#555"/><ellipse cx="51.5" cy="9.5" rx="2.8" ry="3.3" fill="#e8e8e8"/><path d="M62,5 L69,14 M69,5 L62,14" stroke="#fff" stroke-width="2"/></svg>
<div class="a" style="left:6.6px;top:324.7px;width:165.4px;height:161.1px;background:#2a2a2a"></div>
<svg class="a" style="left:8.5px;top:326px;" width="162.0" height="158.5" viewBox="0 0 162.0 158.5"><rect width="162.0" height="158.5" fill="#a3a3a3"/><rect x="39.9" y="0" width="1" height="158.5" fill="#bdbdbd"/><rect x="80.4" y="0" width="1" height="158.5" fill="#bdbdbd"/><rect x="120.80000000000001" y="0" width="1" height="158.5" fill="#bdbdbd"/><rect x="0" y="39.5" width="162.0" height="1" fill="#bdbdbd"/><rect x="0" y="79.10000000000002" width="162.0" height="1" fill="#bdbdbd"/><rect x="0" y="118.89999999999998" width="162.0" height="1" fill="#bdbdbd"/><path d="M0.00,158.50 C12.05,81.05 56.49,29.54 162.00,0.00" stroke="#151515" stroke-width="1.5" fill="none"/><rect x="42.2" y="62.0" width="4" height="5" fill="#fff"/></svg>
<div class="a" style="left:7.3px;top:492.8px;width:162.9px;height:18.7px;background:linear-gradient(#a6a6a6,#c2c2c2);border-radius:9px;box-shadow:0 0 0 1px #2e2e2e"></div>
<div class="a" style="left:88.2px;top:492.8px;width:1px;height:18.7px;background:#2e2e2e"></div>
<div class="t" style="left:37.30px;top:497.80px;font-size:11.34px;line-height:11.34px;color:#111;transform:scaleX(0.7215);">X 0.27727</div>
<div class="t" style="left:121.00px;top:497.80px;font-size:11.34px;line-height:11.34px;color:#111;transform:scaleX(0.6994);">Y 0.60000</div>
<svg class="a" style="left:10.95px;top:499.2px;" width="3.5" height="6" viewBox="0 0 3.5 6"><polygon points="3.5,0 3.5,6 0,3.0" fill="#7c7c7c"/></svg>
<svg class="a" style="left:81.05px;top:499.2px;" width="3.5" height="6" viewBox="0 0 3.5 6"><polygon points="0,0 0,6 3.5,3.0" fill="#7c7c7c"/></svg>
<svg class="a" style="left:91.95px;top:499.2px;" width="3.5" height="6" viewBox="0 0 3.5 6"><polygon points="3.5,0 3.5,6 0,3.0" fill="#7c7c7c"/></svg>
<svg class="a" style="left:162.95px;top:499.2px;" width="3.5" height="6" viewBox="0 0 3.5 6"><polygon points="0,0 0,6 3.5,3.0" fill="#7c7c7c"/></svg>
<div class="a" style="left:7.3px;top:517.7px;width:162.9px;height:18.7px;background:linear-gradient(#5c5c5c,#6a6a6a);border-radius:9px;box-shadow:0 0 0 1px #2e2e2e"></div>
<div class="t" style="left:18.20px;top:523.52px;font-size:10.61px;line-height:10.61px;color:#111;transform:scaleX(0.7317);">Fac:</div>
<div class="t" style="left:138.00px;top:523.52px;font-size:10.61px;line-height:10.61px;color:#111;transform:scaleX(0.7525);">1.000</div>
<div class="a" style="left:7.3px;top:538.8px;width:20.9px;height:18.6px;background:#e8e8e8;border-radius:4px;box-shadow:0 0 0 1px #2e2e2e"></div>
<div class="t" style="left:40.40px;top:544.42px;font-size:10.61px;line-height:10.61px;color:#111;transform:scaleX(0.7729);">Color</div>
<svg class="a" style="left:173.9px;top:277.40000000000003px;" width="9.2" height="11.8" viewBox="0 0 9.2 11.8"><ellipse cx="4.6" cy="5.9" rx="3.6" ry="4.9" fill="#cfcf2a" stroke="#1c1c1c" stroke-width="0.9"/></svg>
<svg class="a" style="left:-4.6px;top:520.5px;" width="9.2" height="11.8" viewBox="0 0 9.2 11.8"><ellipse cx="4.6" cy="5.9" rx="3.6" ry="4.9" fill="#a6a6a6" stroke="#1c1c1c" stroke-width="0.9"/></svg>
<svg class="a" style="left:-4.6px;top:542.4px;" width="9.2" height="11.8" viewBox="0 0 9.2 11.8"><ellipse cx="4.6" cy="5.9" rx="3.6" ry="4.9" fill="#cfcf2a" stroke="#1c1c1c" stroke-width="0.9"/></svg>
<div class="a" style="left:218px;top:272.5px;width:178px;height:214px;background:rgba(0,0,0,0.35);border-radius:5px;filter:blur(2px)"></div>
<div class="a" style="left:216px;top:270.2px;width:177px;height:214px;background:#787878;border-radius:5px"></div>
<div class="a" style="left:218.5px;top:337px;width:172.5px;height:16.6px;background:linear-gradient(#7fa6e6,#5a86d0)"></div>
<div class="a" style="left:221.6px;top:282.0px;width:11.3px;height:14.6px;background:#060606"></div>
<svg class="a" style="left:221.6px;top:282.0px;" width="11.3" height="14.6" viewBox="0 0 11.3 14.6"><path d="M2.5,7 Q5.6,1.5 8.8,7" stroke="#555" stroke-width="0.8" fill="none"/><path d="M3,12 V9 M6,12 V9 M8.5,12 V9" stroke="#444" stroke-width="0.8"/></svg>
<div class="t" style="left:237.60px;top:283.75px;font-size:11.05px;line-height:11.05px;color:#ececec;transform:scaleX(0.6915);">D</div>
<div class="a" style="left:221.6px;top:300.9px;width:11.3px;height:14.6px;background:#060606"></div>
<div class="t" style="left:237.60px;top:302.65px;font-size:11.05px;line-height:11.05px;color:#ececec;transform:scaleX(0.7120);">D.001</div>
<div class="a" style="left:221.6px;top:319.8px;width:11.3px;height:14.6px;background:linear-gradient(90deg,#e2a786,#f3d9c9 50%,#e2a786)"></div>
<div class="t" style="left:237.60px;top:321.55px;font-size:11.05px;line-height:11.05px;color:#ececec;transform:scaleX(0.7020);">Kd</div>
<div class="a" style="left:221.6px;top:338.7px;width:11.3px;height:14.6px;background:linear-gradient(90deg,#f2e6dd,#d99672 30%,#e7b8a0 50%,#d99672 70%,#f2e6dd)"></div>
<div class="t" style="left:237.60px;top:340.45px;font-size:11.05px;line-height:11.05px;color:#141414;transform:scaleX(0.7254);">Kd.001</div>
<svg class="a" style="left:221.6px;top:357.59999999999997px;" width="11.3" height="14.6" viewBox="0 0 11.3 14.6"><rect width="11.3" height="14.6" fill="#d9d0c8"/><rect x="0" y="0" width="11.3" height="3" fill="#a39a92"/><circle cx="3" cy="10" r="2.6" fill="#1a1410"/><circle cx="8.3" cy="10" r="2.6" fill="#1a1410"/><rect x="0" y="4" width="2" height="3" fill="#6a5a50"/><rect x="9.3" y="4" width="2" height="3" fill="#6a5a50"/></svg>
<div class="t" style="left:237.60px;top:359.35px;font-size:11.05px;line-height:11.05px;color:#ececec;transform:scaleX(0.7254);">Kd.002</div>
<svg class="a" style="left:221.6px;top:376.5px;" width="11.3" height="14.6" viewBox="0 0 11.3 14.6"><rect width="11.3" height="14.6" fill="#e9c9b4"/><ellipse cx="5.65" cy="7.6" rx="4.8" ry="6.2" fill="#d49270"/><rect x="3" y="9" width="5" height="1" fill="#a66a50"/></svg>
<div class="t" style="left:237.60px;top:378.25px;font-size:11.05px;line-height:11.05px;color:#ececec;transform:scaleX(0.7254);">Kd.003</div>
<svg class="a" style="left:221.6px;top:395.4px;" width="11.3" height="14.6" viewBox="0 0 11.3 14.6"><rect width="11.3" height="14.6" fill="#e9c9b4"/><ellipse cx="5.65" cy="7.6" rx="4.8" ry="6.2" fill="#d49270"/><rect x="3" y="9" width="5" height="1" fill="#a66a50"/></svg>
<div class="t" style="left:237.60px;top:397.15px;font-size:11.05px;line-height:11.05px;color:#ececec;transform:scaleX(0.7254);">Kd.004</div>
<svg class="a" style="left:221.6px;top:414.3px;" width="11.3" height="14.6" viewBox="0 0 11.3 14.6"><rect width="11.3" height="14.6" fill="#ece7e2"/><rect x="2" y="1" width="7" height="4" fill="#c98c8c"/><rect x="0" y="6" width="11.3" height="8" fill="#f4f0ec"/></svg>
<div class="t" style="left:237.60px;top:416.05px;font-size:11.05px;line-height:11.05px;color:#ececec;transform:scaleX(0.7254);">Kd.005</div>
<svg class="a" style="left:221.6px;top:433.2px;" width="11.3" height="14.6" viewBox="0 0 11.3 14.6"><rect width="11.3" height="14.6" fill="#d9d0c8"/><rect x="0" y="0" width="11.3" height="3" fill="#a39a92"/><circle cx="3" cy="10" r="2.6" fill="#1a1410"/><circle cx="8.3" cy="10" r="2.6" fill="#1a1410"/><rect x="0" y="4" width="2" height="3" fill="#6a5a50"/><rect x="9.3" y="4" width="2" height="3" fill="#6a5a50"/></svg>
<div class="t" style="left:237.60px;top:434.95px;font-size:11.05px;line-height:11.05px;color:#ececec;transform:scaleX(0.7254);">Kd.006</div>
<svg class="a" style="left:221.6px;top:452.09999999999997px;" width="11.3" height="14.6" viewBox="0 0 11.3 14.6"><rect width="11.3" height="14.6" fill="#e9c9b4"/><ellipse cx="5.65" cy="7.6" rx="4.8" ry="6.2" fill="#d49270"/><rect x="3" y="9" width="5" height="1" fill="#a66a50"/></svg>
<div class="t" style="left:237.60px;top:453.85px;font-size:11.05px;line-height:11.05px;color:#ececec;transform:scaleX(0.7254);">Kd.007</div>
<svg class="a" style="left:292px;top:464px;" width="12" height="9" viewBox="0 0 12 9"><polygon points="0.8,0.8 11.2,0.8 6,8.2" fill="#fff" stroke="#222" stroke-width="0.9"/></svg>
<div class="t" style="left:27.00px;top:655.10px;font-size:13.23px;line-height:13.23px;color:#e8e8e8;transform:scaleX(0.7421);">Torso</div>
<div class="a" style="left:0px;top:697px;width:410px;height:7px;background:#444"></div>
<div class="a" style="left:0px;top:699.5px;width:410px;height:2px;background:#2e2e2e"></div>
<div class="a" style="left:4px;top:683.5px;width:420px;height:14.5px;background:linear-gradient(#9a9a9a,#8e8e8e 60%,#848484);border-radius:8px;box-shadow:0 0 0 1px #2a2a2a"></div>
<div class="a" style="left:0px;top:703.5px;width:410px;height:33.2px;background:linear-gradient(#777,#6c6c6c)"></div>
<div class="a" style="left:7.4px;top:709.3px;width:26.6px;height:24.6px;background:#3e3e3e;border-radius:4px;box-shadow:0 0 0 1px #2a2a2a"></div>
<svg class="a" style="left:7.4px;top:709.3px;" width="27" height="25" viewBox="0 0 27 25"><rect x="6.6" y="3.6" width="6.8" height="7.2" rx="1" fill="#eee" stroke="#000" stroke-width="1.2"/><rect x="3.5" y="14.8" width="7" height="7.5" rx="1" fill="#eee" stroke="#000" stroke-width="1.2"/><path d="M13.5,7 Q17.5,8 17.5,13 Q17.5,18.5 11,18.5" stroke="#b8d0e8" stroke-width="1.6" fill="none"/><polygon points="19,11.4 23.3,11.4 21.15,4.7" fill="#c8c8c8"/><polygon points="19,13.7 23.3,13.7 21.15,20.7" fill="#c8c8c8"/></svg>
<svg class="a" style="left:0px;top:720px;" width="12" height="18" viewBox="0 0 12 18"><path d="M-1,2 L9,16.5 M-1,6.5 L6,16.5 M-1,11 L3,16.5" stroke="#151515" stroke-width="1.2"/><path d="M-1,3.8 L8,16.5 M-1,8.3 L5,16.5 M-1,12.8 L2,16.5" stroke="#cfcfcf" stroke-width="1.5"/></svg>
<div class="t" style="left:46.30px;top:716.79px;font-size:13.95px;line-height:13.95px;color:#111;transform:scaleX(0.7567);">View</div>
<div class="t" style="left:88.00px;top:716.79px;font-size:13.95px;line-height:13.95px;color:#111;transform:scaleX(0.7424);">Select</div>
<div class="t" style="left:135.50px;top:716.79px;font-size:13.95px;line-height:13.95px;color:#111;transform:scaleX(0.7167);">Add</div>
<div class="t" style="left:172.40px;top:716.79px;font-size:13.95px;line-height:13.95px;color:#111;transform:scaleX(0.7197);">Node</div>
<div class="a" style="left:208.5px;top:709.9px;width:55.2px;height:24.4px;background:#454545;border-radius:4px;box-shadow:0 0 0 1px #2e2e2e"></div>
<div class="a" style="left:208.5px;top:709.9px;width:18px;height:24.4px;background:linear-gradient(#6f9ce2,#4f7fcc);border-radius:4px 0 0 4px"></div>
<div class="a" style="left:226.5px;top:709.9px;width:1px;height:24.4px;background:#2e2e2e"></div>
<div class="a" style="left:245.4px;top:709.9px;width:1px;height:24.4px;background:#2e2e2e"></div>
<svg class="a" style="left:211.5px;top:714px;" width="12.0" height="16" viewBox="0 0 12.0 16"><defs><radialGradient id="sg211714" cx="35%" cy="30%" r="70%"><stop offset="0" stop-color="#ffffff"/><stop offset="0.55" stop-color="#d9c5c0"/><stop offset="1" stop-color="#6d3a33"/></radialGradient></defs><ellipse cx="6.0" cy="8.0" rx="5.7" ry="7.7" fill="url(#sg211714)" stroke="#222" stroke-width="0.8"/><path d="M6.0,8.0 L11.0,8.0 A5.0,7.0 0 0 1 6.0,15 Z" fill="#a4553f" opacity="0.7"/></svg>
<svg class="a" style="left:229px;top:713px;" width="14" height="18" viewBox="0 0 14 18"><rect x="3" y="3" width="9" height="13" fill="#d8d8d8" stroke="#222" stroke-width="0.8" transform="rotate(8 7 9)"/><rect x="1" y="1" width="9" height="13" fill="#b0c4de" stroke="#222" stroke-width="0.8"/><path d="M5,4 V11" stroke="#2060b0" stroke-width="1.5"/></svg>
<svg class="a" style="left:248px;top:714px;" width="13" height="16" viewBox="0 0 13 16"><rect x="0.0" y="0" width="3.25" height="4" fill="#7a1a1a"/><rect x="3.25" y="0" width="3.25" height="4" fill="#e6e6e6"/><rect x="6.5" y="0" width="3.25" height="4" fill="#7a1a1a"/><rect x="9.75" y="0" width="3.25" height="4" fill="#e6e6e6"/><rect x="0.0" y="4" width="3.25" height="4" fill="#e6e6e6"/><rect x="3.25" y="4" width="3.25" height="4" fill="#7a1a1a"/><rect x="6.5" y="4" width="3.25" height="4" fill="#e6e6e6"/><rect x="9.75" y="4" width="3.25" height="4" fill="#7a1a1a"/><rect x="0.0" y="8" width="3.25" height="4" fill="#7a1a1a"/><rect x="3.25" y="8" width="3.25" height="4" fill="#e6e6e6"/><rect x="6.5" y="8" width="3.25" height="4" fill="#7a1a1a"/><rect x="9.75" y="8" width="3.25" height="4" fill="#e6e6e6"/><rect x="0.0" y="12" width="3.25" height="4" fill="#e6e6e6"/><rect x="3.25" y="12" width="3.25" height="4" fill="#7a1a1a"/><rect x="6.5" y="12" width="3.25" height="4" fill="#e6e6e6"/><rect x="9.75" y="12" width="3.25" height="4" fill="#7a1a1a"/></svg>
<div class="a" style="left:269.6px;top:710px;width:150px;height:24.3px;background:linear-gradient(#d0d0d0,#b6b6b6);border-radius:4px;box-shadow:0 0 0 1px #2e2e2e"></div>
<div class="a" style="left:269.6px;top:710px;width:29.1px;height:24.3px;background:#454545;border-radius:4px 0 0 4px"></div>
<svg class="a" style="left:273px;top:714px;" width="12" height="16" viewBox="0 0 12 16"><defs><radialGradient id="sg273714" cx="35%" cy="30%" r="70%"><stop offset="0" stop-color="#ffffff"/><stop offset="0.55" stop-color="#d9c5c0"/><stop offset="1" stop-color="#6d3a33"/></radialGradient></defs><ellipse cx="6.0" cy="8.0" rx="5.7" ry="7.7" fill="url(#sg273714)" stroke="#222" stroke-width="0.8"/><path d="M6.0,8.0 L11,8.0 A5.0,7.0 0 0 1 6.0,15 Z" fill="#a4553f" opacity="0.7"/></svg>
<svg class="a" style="left:287px;top:712px;" width="9" height="20" viewBox="0 0 9 20"><polygon points="1,8 8,8 4.5,2" fill="#c0c0c0"/><polygon points="1,12 8,12 4.5,18" fill="#c0c0c0"/></svg>
<div class="t" style="left:306.00px;top:716.72px;font-size:14.39px;line-height:14.39px;color:#111;transform:scaleX(0.6679);">Torso</div>
<div class="a" style="left:0px;top:736.6px;width:410px;height:2px;background:#262626"></div>
<div class="a" style="left:0px;top:738.5px;width:410px;height:23.3px;background:#494949"></div>
<div class="a" style="left:0px;top:738.5px;width:171px;height:23.3px;background:#404040"></div>
<div class="a" style="left:23.4px;top:738.5px;width:1px;height:24.5px;background:#363636"></div>
<div class="a" style="left:51px;top:738.5px;width:1px;height:24.5px;background:#363636"></div>
<div class="a" style="left:80.7px;top:738.5px;width:1px;height:24.5px;background:#363636"></div>
<div class="a" style="left:110.4px;top:738.5px;width:1px;height:24.5px;background:#363636"></div>
<div class="a" style="left:140.1px;top:738.5px;width:1px;height:24.5px;background:#363636"></div>
<div class="a" style="left:199.6px;top:738.5px;width:1px;height:24.5px;background:#404040"></div>
<div class="a" style="left:228.7px;top:738.5px;width:1px;height:24.5px;background:#404040"></div>
<div class="a" style="left:258.4px;top:738.5px;width:1px;height:24.5px;background:#404040"></div>
<div class="a" style="left:288.7px;top:738.5px;width:1px;height:24.5px;background:#404040"></div>
<div class="a" style="left:317.4px;top:738.5px;width:1px;height:24.5px;background:#404040"></div>
<div class="a" style="left:347.6px;top:738.5px;width:1px;height:24.5px;background:#404040"></div>
<div class="a" style="left:376.2px;top:738.5px;width:1px;height:24.5px;background:#404040"></div>
<div class="a" style="left:405px;top:738.5px;width:1px;height:24.5px;background:#404040"></div>
<div class="a" style="left:170px;top:738.5px;width:4px;height:23.3px;background:#58c03c"></div>
<div class="a" style="left:0px;top:761.8px;width:410px;height:23.5px;background:#6a6a6a"></div>
<div class="a" style="left:3.5px;top:764px;width:420px;height:15px;background:linear-gradient(#a2a2a2,#949494 60%,#8a8a8a);border-radius:7.5px;box-shadow:0 0 0 1px #3a3a3a"></div>
<div class="a" style="left:4.9px;top:767px;width:5.8px;height:9px;background:#7e7e7e;border-radius:3px"></div>
<div class="t" style="left:43.50px;top:765.61px;font-size:13.81px;line-height:13.81px;color:#111;transform:scaleX(0.7969);">-40</div>
<div class="t" style="left:103.00px;top:765.61px;font-size:13.81px;line-height:13.81px;color:#111;transform:scaleX(0.7418);">-20</div>
<div class="t" style="left:168.80px;top:765.61px;font-size:13.81px;line-height:13.81px;color:#111;transform:scaleX(0.6916);">0</div>
<div class="t" style="left:223.60px;top:765.61px;font-size:13.81px;line-height:13.81px;color:#111;transform:scaleX(0.8090);">20</div>
<div class="t" style="left:281.80px;top:765.61px;font-size:13.81px;line-height:13.81px;color:#111;transform:scaleX(0.8286);">40</div>
<div class="t" style="left:340.00px;top:765.61px;font-size:13.81px;line-height:13.81px;color:#111;transform:scaleX(0.8417);">60</div>
<div class="t" style="left:399.60px;top:765.61px;font-size:13.81px;line-height:13.81px;color:#111;transform:scaleX(0.8417);">80</div>
<div class="a" style="left:0px;top:785px;width:410px;height:32.5px;background:linear-gradient(#777,#6c6c6c)"></div>
<div class="a" style="left:0px;top:784.5px;width:410px;height:1px;background:#5e5e5e"></div>
<div class="a" style="left:8.2px;top:788.8px;width:27px;height:24.6px;background:#3c3c3c;border-radius:4px;box-shadow:0 0 0 1px #2a2a2a"></div>
<svg class="a" style="left:8.2px;top:788.8px;" width="27" height="25" viewBox="0 0 27 25"><ellipse cx="10.6" cy="12.1" rx="5.8" ry="8.4" fill="#eee" stroke="#000" stroke-width="1.3"/><path d="M10.6,12.5 L12.5,5.5" stroke="#333" stroke-width="1.1"/><path d="M10.6,12.5 L12,16" stroke="#c03040" stroke-width="1"/><polygon points="18.8,11.5 24,11.5 21.4,3.9" fill="#c8c8c8"/><polygon points="18.8,13.3 24,13.3 21.4,20.3" fill="#c8c8c8"/></svg>
<svg class="a" style="left:0px;top:800.5px;" width="12" height="18" viewBox="0 0 12 18"><path d="M-1,2 L9,16.5 M-1,6.5 L6,16.5 M-1,11 L3,16.5" stroke="#151515" stroke-width="1.2"/><path d="M-1,3.8 L8,16.5 M-1,8.3 L5,16.5 M-1,12.8 L2,16.5" stroke="#cfcfcf" stroke-width="1.5"/></svg>
<div class="t" style="left:46.40px;top:795.79px;font-size:14.53px;line-height:14.53px;color:#111;transform:scaleX(0.7296);">View</div>
<div class="t" style="left:89.00px;top:795.79px;font-size:14.53px;line-height:14.53px;color:#111;transform:scaleX(0.7190);">Marker</div>
<div class="t" style="left:140.00px;top:795.79px;font-size:14.53px;line-height:14.53px;color:#111;transform:scaleX(0.7142);">Frame</div>
<div class="t" style="left:189.00px;top:795.79px;font-size:14.53px;line-height:14.53px;color:#111;transform:scaleX(0.7108);">Playback</div>
<div class="a" style="left:243.5px;top:789.5px;width:36.8px;height:23.3px;background:linear-gradient(#a0a0a0,#8c8c8c);border-radius:4px;box-shadow:0 0 0 1px #2e2e2e"></div>
<div class="a" style="left:261.5px;top:789.5px;width:1px;height:23.3px;background:#3a3a3a"></div>
<svg class="a" style="left:245px;top:791px;" width="16" height="20" viewBox="0 0 16 20"><circle cx="8" cy="10" r="6.5" fill="#f4f4f4" stroke="#333" stroke-width="0.9"/><path d="M8,10 V3.5 A6.5,6.5 0 0 1 14.5,10 Z" fill="#f0a010"/><path d="M8,10 L11,14" stroke="#c03030" stroke-width="1"/></svg>
<svg class="a" style="left:264px;top:791px;" width="16" height="20" viewBox="0 0 16 20"><path d="M4.5,9 V6 A3.5,3.5 0 0 1 11.5,6 V9" stroke="#eee" stroke-width="1.6" fill="none"/><rect x="3" y="9" width="10" height="9" fill="#e8e8e8" stroke="#444" stroke-width="0.8"/></svg>
<div class="a" style="left:286px;top:789.5px;width:107.2px;height:23.3px;background:linear-gradient(#c8c8c8,#b0b0b0);border-radius:11px 0 0 11px;box-shadow:0 0 0 1px #2e2e2e"></div>
<div class="a" style="left:395px;top:789.5px;width:30px;height:23.3px;background:linear-gradient(#c8c8c8,#b0b0b0);box-shadow:0 0 0 1px #2e2e2e"></div>
<div class="t" style="left:299.40px;top:796.41px;font-size:13.81px;line-height:13.81px;color:#111;transform:scaleX(0.7515);">Start:</div>
<div class="t" style="left:373.00px;top:796.41px;font-size:13.81px;line-height:13.81px;color:#111;transform:scaleX(0.5611);">1</div>
<svg class="a" style="left:290.0px;top:798.0px;" width="4" height="7" viewBox="0 0 4 7"><polygon points="4,0 4,7 0,3.5" fill="#8a8a8a"/></svg>
<svg class="a" style="left:384.0px;top:798.0px;" width="4" height="7" viewBox="0 0 4 7"><polygon points="0,0 0,7 4,3.5" fill="#8a8a8a"/></svg>
<svg class="a" style="left:398.0px;top:798.0px;" width="4" height="7" viewBox="0 0 4 7"><polygon points="4,0 4,7 0,3.5" fill="#8a8a8a"/></svg>
<div class="a" style="left:0px;top:817.3px;width:410px;height:8.8px;background:linear-gradient(#c2d4ea,#b4d2ea 60%,#a8d8ee)"></div>
<div class="a" style="left:0px;top:826px;width:410px;height:2.3px;background:#1a2a3a"></div>
<div class="a" style="left:0px;top:828.4px;width:410px;height:49.2px;background:linear-gradient(90deg,#8ea2ba,#9aacc2 20%,#b0c0d4 40%,#bccbdc 70%,#b0c2d6)"></div>
<div class="a" style="left:0px;top:877.3px;width:410px;height:20px;background:#ffffff"></div>
<svg class="a" style="left:0px;top:830px;" width="35" height="47" viewBox="0 0 35 47"><defs><radialGradient id="orb" cx="50%" cy="40%" r="60%"><stop offset="0" stop-color="#9ad8f0"/><stop offset="0.55" stop-color="#2a86c0"/><stop offset="0.85" stop-color="#10508a"/><stop offset="1" stop-color="#40c0f0"/></radialGradient></defs><ellipse cx="17.3" cy="23.3" rx="16.7" ry="23" fill="url(#orb)" stroke="#3a6a90" stroke-width="0.9"/><path d="M8,11 Q13,8.5 17.5,11 V22 Q13,19.5 8,22 Z" fill="#f06030"/><path d="M18.5,11.5 Q23,14 27.5,12 V22.5 Q23,24.5 18.5,22.5 Z" fill="#8cc43c"/><path d="M8,23 Q13,20.5 17.5,23 V35 Q13,32.5 8,35 Z" fill="#30a8e8"/><path d="M18.5,23.5 Q23,26 27.5,24 V36 Q23,38 18.5,36 Z" fill="#fcc420"/><ellipse cx="17.3" cy="14" rx="12" ry="10" fill="#fff" opacity="0.18"/></svg>
<svg class="a" style="left:45px;top:833px;" width="9" height="40" viewBox="0 0 9 40"><rect x="0.5" y="1.5" width="1.8" height="1.8" fill="#3a4a5a"/><rect x="3.5" y="1.5" width="1.8" height="1.8" fill="#3a4a5a"/><rect x="6.5" y="1.5" width="1.8" height="1.8" fill="#3a4a5a"/><rect x="0.5" y="6.2" width="1.8" height="1.8" fill="#3a4a5a"/><rect x="3.5" y="6.2" width="1.8" height="1.8" fill="#3a4a5a"/><rect x="6.5" y="6.2" width="1.8" height="1.8" fill="#3a4a5a"/><rect x="0.5" y="10.9" width="1.8" height="1.8" fill="#3a4a5a"/><rect x="3.5" y="10.9" width="1.8" height="1.8" fill="#3a4a5a"/><rect x="6.5" y="10.9" width="1.8" height="1.8" fill="#3a4a5a"/><rect x="0.5" y="15.600000000000001" width="1.8" height="1.8" fill="#3a4a5a"/><rect x="3.5" y="15.600000000000001" width="1.8" height="1.8" fill="#3a4a5a"/><rect x="6.5" y="15.600000000000001" width="1.8" height="1.8" fill="#3a4a5a"/><rect x="0.5" y="20.3" width="1.8" height="1.8" fill="#3a4a5a"/><rect x="3.5" y="20.3" width="1.8" height="1.8" fill="#3a4a5a"/><rect x="6.5" y="20.3" width="1.8" height="1.8" fill="#3a4a5a"/><rect x="0.5" y="25.0" width="1.8" height="1.8" fill="#3a4a5a"/><rect x="3.5" y="25.0" width="1.8" height="1.8" fill="#3a4a5a"/><rect x="6.5" y="25.0" width="1.8" height="1.8" fill="#3a4a5a"/><rect x="0.5" y="29.700000000000003" width="1.8" height="1.8" fill="#3a4a5a"/><rect x="3.5" y="29.700000000000003" width="1.8" height="1.8" fill="#3a4a5a"/><rect x="6.5" y="29.700000000000003" width="1.8" height="1.8" fill="#3a4a5a"/><rect x="0.5" y="34.4" width="1.8" height="1.8" fill="#3a4a5a"/><rect x="3.5" y="34.4" width="1.8" height="1.8" fill="#3a4a5a"/><rect x="6.5" y="34.4" width="1.8" height="1.8" fill="#3a4a5a"/></svg>
<svg class="a" style="left:75px;top:832.5px;" width="30" height="40.5" viewBox="0 0 30 40.5"><ellipse cx="15" cy="20.25" rx="14.8" ry="20" fill="#101c30"/><ellipse cx="15" cy="20.25" rx="14.8" ry="20" fill="none" stroke="#1e4a80" stroke-width="1.6" opacity="0.8"/><ellipse cx="15" cy="20.5" rx="11.3" ry="14.3" fill="#f2f2f2"/><text x="14.5" y="27" font-family="Liberation Sans" font-style="italic" font-weight="bold" font-size="15" fill="#0a0a0a" text-anchor="middle" transform="scale(1,1.25) translate(0,-5.5)">hp</text></svg>
<svg class="a" style="left:132.7px;top:832px;" width="30" height="41" viewBox="0 0 30 41"><defs><linearGradient id="bapp" x1="0" y1="0" x2="0.3" y2="1"><stop offset="0" stop-color="#5ab8f8"/><stop offset="1" stop-color="#1a80e0"/></linearGradient></defs><rect width="30" height="41" rx="5" fill="url(#bapp)"/><circle cx="12" cy="14" r="5.5" fill="none" stroke="#fff" stroke-width="3.2"/><path d="M17,9 L24,8 L22,20 Q22,30 12,29 L6,28" stroke="#fff" stroke-width="3.2" fill="none"/><path d="M6,33 Q15,29 25,33" stroke="#fff" stroke-width="2.6" fill="none"/></svg>
<div class="a" style="left:178.5px;top:828.6px;width:55.099999999999994px;height:48.3px;background:linear-gradient(#d6e0ec,#b6c6d8);border-radius:3px;box-shadow:inset 0 0 0 1px #7d8ea6,inset 0 0 0 2px rgba(255,255,255,0.5)"></div>
<div class="a" style="left:236px;top:828.6px;width:55.39999999999998px;height:48.3px;background:linear-gradient(#d6e0ec,#b6c6d8);border-radius:3px;box-shadow:inset 0 0 0 1px #7d8ea6,inset 0 0 0 2px rgba(255,255,255,0.5)"></div>
<div class="a" style="left:293.3px;top:828.6px;width:55.69999999999999px;height:48.3px;background:linear-gradient(#e6edf5,#cfdae6);border-radius:3px;box-shadow:inset 0 0 0 1px #7d8ea6,inset 0 0 0 2px rgba(255,255,255,0.5)"></div>
<div class="a" style="left:351.5px;top:828.6px;width:55.89999999999998px;height:48.3px;background:linear-gradient(#d6e0ec,#b6c6d8);border-radius:3px;box-shadow:inset 0 0 0 1px #7d8ea6,inset 0 0 0 2px rgba(255,255,255,0.5)"></div>
<svg class="a" style="left:190.6px;top:835.6px;" width="31" height="38" viewBox="0 0 31 38"><path d="M2,6 H12 L14,9 H29 V34 H2 Z" fill="#e8c860" stroke="#b89830" stroke-width="0.8"/><rect x="2" y="12" width="27" height="22" fill="#f6e49a"/><rect x="8" y="4" width="3" height="3" fill="#40c040"/><rect x="16" y="6" width="3" height="3" fill="#e03030"/><rect x="22" y="9" width="3" height="3" fill="#3080e0"/><path d="M6,37 V25 H25 V37 M10,37 V30 H21 V37" stroke="#4ab0e0" stroke-width="3" fill="none"/></svg>
<svg class="a" style="left:249px;top:835px;" width="28" height="40" viewBox="0 0 28 40"><path d="M4,2 L25,6 V26 L4,22 Z" fill="#2a3ab0" stroke="#888" stroke-width="1"/><path d="M5,4 L24,8 V12 L5,8 Z" fill="#4a8ae0"/><rect x="1" y="12" width="20" height="9" fill="#a0d0f0" stroke="#4a8ac0" stroke-width="0.8"/><ellipse cx="15" cy="34" rx="8" ry="5" fill="#d0d0d0" stroke="#999" stroke-width="0.8"/><rect x="13" y="24" width="4" height="7" fill="#aaa"/></svg>
<svg class="a" style="left:304px;top:834px;" width="36" height="36" viewBox="0 0 36 36"><path d="M4,16 L17,6.5 M9,13 L3,13.5 M14,22 L3.5,29.5" stroke="#ea7a10" stroke-width="4.6" stroke-linecap="round"/><circle cx="21" cy="18" r="11.5" fill="#ea7a10"/><circle cx="21.5" cy="17.5" r="7.6" fill="#fff"/><circle cx="21.5" cy="17.5" r="4.6" fill="#1e4d7e"/></svg>
<svg class="a" style="left:362px;top:835px;" width="34" height="40" viewBox="0 0 34 40"><path d="M4,22 Q2,8 17,7 Q30,7 29,18 Q28,26 20,27 Q16,28 17,33 Q14,38 8,34 Q4,30 4,22 Z" fill="#d8e8f4" stroke="#7a9ab8" stroke-width="1"/><circle cx="9" cy="20" r="2.5" fill="#e03030"/><circle cx="12" cy="14" r="2.5" fill="#40b040"/><circle cx="19" cy="12" r="2.5" fill="#f0c020"/><circle cx="12" cy="26" r="2.2" fill="#3070d0"/><path d="M31,3 L17,37" stroke="#e0a040" stroke-width="2.4"/><path d="M31,3 L28,11" stroke="#c08030" stroke-width="3.5"/></svg>
<div class="a" style="left:820px;top:0px;width:13px;height:437.5px;background:linear-gradient(90deg,#7a7a7a,#8e8e8e 50%,#7e7e7e)"></div>
<div class="a" style="left:832.4px;top:0px;width:3.8px;height:437.5px;background:#353535"></div>
<div class="a" style="left:836.2px;top:0px;width:1.5px;height:437.5px;background:#858585"></div>
<div class="a" style="left:836.4px;top:0px;width:160px;height:437.5px;background:#727272"></div>
<div class="t" style="left:860.50px;top:-6.29px;font-size:11.92px;line-height:11.92px;color:#111;transform:scaleX(0.9057);">Node</div>
<svg class="a" style="left:850px;top:0px;" width="6" height="3" viewBox="0 0 6 3"><polygon points="0,0 6,0 3,3" fill="#1a1a1a"/></svg>
<div class="t" style="left:851.70px;top:31.39px;font-size:13.95px;line-height:13.95px;color:#111;transform:scaleX(0.7447);">Name:</div>
<div class="t" style="left:851.70px;top:62.66px;font-size:14.10px;line-height:14.10px;color:#111;transform:scaleX(0.7314);">Label:</div>
<div class="a" style="left:899.5px;top:24.4px;width:100.5px;height:23.800000000000004px;background:linear-gradient(#a8a8a8,#c8c8c8);border-radius:5px;box-shadow:0 0 0 1px #2e2e2e"></div>
<div class="a" style="left:899.5px;top:55.5px;width:100.5px;height:24.900000000000006px;background:linear-gradient(#a8a8a8,#c8c8c8);border-radius:5px;box-shadow:0 0 0 1px #2e2e2e"></div>
<svg class="a" style="left:904px;top:26.5px;" width="13" height="20" viewBox="0 0 13 20"><rect x="0.5" y="0.5" width="12" height="19" rx="1.5" fill="#f4f4f4" stroke="#222" stroke-width="1"/><rect x="2.5" y="3" width="8" height="1" fill="#333"/><rect x="2.5" y="6" width="3" height="9" fill="#222"/><rect x="5.5" y="6" width="4" height="2" fill="#444"/><rect x="6" y="10" width="4" height="5" fill="#555"/></svg>
<svg class="a" style="left:904px;top:57.5px;" width="13" height="20" viewBox="0 0 13 20"><rect x="0.5" y="0.5" width="12" height="19" rx="1.5" fill="#f4f4f4" stroke="#222" stroke-width="1"/><rect x="2.5" y="3" width="8" height="1" fill="#333"/><rect x="2.5" y="6" width="3" height="9" fill="#222"/><rect x="5.5" y="6" width="4" height="2" fill="#444"/><rect x="6" y="10" width="4" height="5" fill="#555"/></svg>
<div class="t" style="left:921.60px;top:31.39px;font-size:13.95px;line-height:13.95px;color:#111;transform:scaleX(0.7620);">Material</div>
<div class="a" style="left:841px;top:88.4px;width:150px;height:2.4px;background:#4a4a4a"></div>
<div class="a" style="left:841px;top:90.8px;width:150px;height:1px;background:#7e7e7e"></div>
<svg class="a" style="left:848.6px;top:99.5px;" width="7.1" height="11" viewBox="0 0 7.1 11"><polygon points="0,0 7.1,5.5 0,11" fill="#1a1a1a"/></svg>
<div class="a" style="left:860px;top:97.3px;width:12.7px;height:16.1px;background:linear-gradient(#3a3a3a,#4e4e4e);border-radius:4px;box-shadow:0 0 0 1px #2a2a2a"></div>
<div class="t" style="left:879.00px;top:99.24px;font-size:14.24px;line-height:14.24px;color:#111;transform:scaleX(0.8107);">Color</div>
<div class="a" style="left:841px;top:119.5px;width:150px;height:2.4px;background:#4a4a4a"></div>
<div class="a" style="left:841px;top:121.9px;width:150px;height:1px;background:#7e7e7e"></div>
<svg class="a" style="left:848.6px;top:130.4px;" width="7.5" height="10.6" viewBox="0 0 7.5 10.6"><polygon points="0,0 7.5,0 3.75,10.6" fill="#1a1a1a"/></svg>
<div class="t" style="left:860.70px;top:128.55px;font-size:15.41px;line-height:15.41px;color:#111;transform:scaleX(0.7302);">Properties</div>
<svg class="a" style="left:984.5px;top:0px;" width="6" height="7" viewBox="0 0 6 7"><rect x="0" y="0" width="1.6" height="1.8" fill="#2e2e2e"/><rect x="3" y="0" width="1.6" height="1.8" fill="#2e2e2e"/><rect x="0" y="3.5" width="1.6" height="1.8" fill="#2e2e2e"/><rect x="3" y="3.5" width="1.6" height="1.8" fill="#2e2e2e"/></svg>
<svg class="a" style="left:984.5px;top:102px;" width="6" height="7" viewBox="0 0 6 7"><rect x="0" y="0" width="1.6" height="1.8" fill="#2e2e2e"/><rect x="3" y="0" width="1.6" height="1.8" fill="#2e2e2e"/><rect x="0" y="3.5" width="1.6" height="1.8" fill="#2e2e2e"/><rect x="3" y="3.5" width="1.6" height="1.8" fill="#2e2e2e"/></svg>
<svg class="a" style="left:984.5px;top:133px;" width="6" height="7" viewBox="0 0 6 7"><rect x="0" y="0" width="1.6" height="1.8" fill="#2e2e2e"/><rect x="3" y="0" width="1.6" height="1.8" fill="#2e2e2e"/><rect x="0" y="3.5" width="1.6" height="1.8" fill="#2e2e2e"/><rect x="3" y="3.5" width="1.6" height="1.8" fill="#2e2e2e"/></svg>
<svg class="a" style="left:984.5px;top:371px;" width="6" height="7" viewBox="0 0 6 7"><rect x="0" y="0" width="1.6" height="1.8" fill="#2e2e2e"/><rect x="3" y="0" width="1.6" height="1.8" fill="#2e2e2e"/><rect x="0" y="3.5" width="1.6" height="1.8" fill="#2e2e2e"/><rect x="3" y="3.5" width="1.6" height="1.8" fill="#2e2e2e"/></svg>
<div class="a" style="left:844.5px;top:161.6px;width:160px;height:24.1px;background:#3c3c3c;border-radius:5px;box-shadow:0 0 0 1px #262626"></div>
<svg class="a" style="left:849px;top:165px;" width="13" height="17" viewBox="0 0 13 17"><defs><radialGradient id="sg849165" cx="35%" cy="30%" r="70%"><stop offset="0" stop-color="#ffffff"/><stop offset="0.55" stop-color="#d9c5c0"/><stop offset="1" stop-color="#6d3a33"/></radialGradient></defs><ellipse cx="6.5" cy="8.5" rx="6.2" ry="8.2" fill="url(#sg849165)" stroke="#222" stroke-width="0.8"/><path d="M6.5,8.5 L12,8.5 A5.5,7.5 0 0 1 6.5,16 Z" fill="#a4553f" opacity="0.7"/></svg>
<svg class="a" style="left:863.5px;top:164px;" width="9" height="19" viewBox="0 0 9 19"><polygon points="1,8 8,8 4.5,2" fill="#bdbdbd"/><polygon points="1,11 8,11 4.5,17" fill="#bdbdbd"/></svg>
<div class="a" style="left:873.7px;top:161.6px;width:66.9px;height:24.1px;background:linear-gradient(#c4c4c4,#a8a8a8)"></div>
<div class="t" style="left:880.60px;top:168.36px;font-size:14.10px;line-height:14.10px;color:#111;transform:scaleX(0.7710);">Material.0...</div>
<div class="a" style="left:940.6px;top:161.6px;width:18.8px;height:24.1px;background:linear-gradient(#a8a8a8,#949494);border-left:1px solid #555;box-sizing:border-box"></div>
<div class="t" style="left:946.50px;top:168.36px;font-size:14.10px;line-height:14.10px;color:#111;transform:scaleX(0.6977);">F</div>
<div class="a" style="left:959.4px;top:161.6px;width:18.8px;height:24.1px;background:linear-gradient(#a8a8a8,#949494);border-left:1px solid #555;box-sizing:border-box"></div>
<div class="a" style="left:978.2px;top:161.6px;width:20px;height:24.1px;background:linear-gradient(#a8a8a8,#949494);border-left:1px solid #555;box-sizing:border-box"></div>
<svg class="a" style="left:961px;top:164px;" width="16" height="19" viewBox="0 0 16 19"><path d="M8,2.5 V16.5 M1.5,9.5 H14.5" stroke="#222" stroke-width="4"/><path d="M8,3 V16 M2,9.5 H14" stroke="#fff" stroke-width="2"/></svg>
<svg class="a" style="left:979.5px;top:164px;" width="12" height="19" viewBox="0 0 12 19"><path d="M2,4 L11,15 M11,4 L2,15" stroke="#222" stroke-width="4"/><path d="M2,4 L11,15 M11,4 L2,15" stroke="#fff" stroke-width="2"/></svg>
<div class="a" style="left:846.9px;top:196.6px;width:12.800000000000068px;height:16.400000000000006px;background:linear-gradient(#3a3a3a,#4e4e4e);border-radius:4px;box-shadow:0 0 0 1px #2a2a2a"></div>
<svg class="a" style="left:846.9px;top:194.6px;" width="14.800000000000068" height="18.400000000000006" viewBox="0 0 14.800000000000068 18.400000000000006"><path d="M2.560000000000014,9.020000000000003 L5.760000000000031,13.940000000000005 L12.160000000000064,1.6400000000000006" stroke="#e8e8e8" stroke-width="1.8" fill="none"/></svg>
<div class="t" style="left:867.80px;top:199.79px;font-size:13.95px;line-height:13.95px;color:#ececec;transform:scaleX(0.7225);">Diffuse</div>
<div class="a" style="left:846.9px;top:224px;width:12.800000000000068px;height:16.80000000000001px;background:linear-gradient(#3a3a3a,#4e4e4e);border-radius:4px;box-shadow:0 0 0 1px #2a2a2a"></div>
<svg class="a" style="left:846.9px;top:222px;" width="14.800000000000068" height="18.80000000000001" viewBox="0 0 14.800000000000068 18.80000000000001"><path d="M2.560000000000014,9.240000000000007 L5.760000000000031,14.28000000000001 L12.160000000000064,1.6800000000000013" stroke="#e8e8e8" stroke-width="1.8" fill="none"/></svg>
<div class="t" style="left:867.80px;top:227.36px;font-size:14.10px;line-height:14.10px;color:#ececec;transform:scaleX(0.7228);">Specular</div>
<div class="a" style="left:846.9px;top:252px;width:12.800000000000068px;height:17px;background:linear-gradient(#3a3a3a,#4e4e4e);border-radius:4px;box-shadow:0 0 0 1px #2a2a2a"></div>
<div class="t" style="left:867.80px;top:255.39px;font-size:13.95px;line-height:13.95px;color:#111;transform:scaleX(0.7585);">Invert Normal</div>
<div class="t" style="left:851.40px;top:300.64px;font-size:14.24px;line-height:14.24px;color:#111;transform:scaleX(0.7184);">Inputs:</div>
<div class="a" style="left:844.3px;top:325.5px;width:160px;height:23.7px;background:linear-gradient(#555,#383838);border-radius:5px;box-shadow:0 0 0 1px #262626"></div>
<div class="t" style="left:851.40px;top:331.84px;font-size:14.24px;line-height:14.24px;color:#f0f0f0;transform:scaleX(0.7380);">Normal</div>
<div class="a" style="left:841px;top:357.8px;width:150px;height:2.4px;background:#4a4a4a"></div>
<div class="a" style="left:841px;top:360.2px;width:150px;height:1px;background:#7e7e7e"></div>
<svg class="a" style="left:848.7px;top:369px;" width="7.7" height="11" viewBox="0 0 7.7 11"><polygon points="0,0 7.7,0 3.85,11" fill="#1a1a1a"/></svg>
<div class="a" style="left:860.3px;top:366.5px;width:12.5px;height:17.0px;background:linear-gradient(#3a3a3a,#4e4e4e);border-radius:4px;box-shadow:0 0 0 1px #2a2a2a"></div>
<svg class="a" style="left:860.3px;top:364.5px;" width="14.5" height="19.0" viewBox="0 0 14.5 19.0"><path d="M2.5,9.350000000000001 L5.625,14.45 L11.875,1.7000000000000002" stroke="#e8e8e8" stroke-width="1.8" fill="none"/></svg>
<div class="t" style="left:879.00px;top:367.40px;font-size:15.12px;line-height:15.12px;color:#111;transform:scaleX(0.7395);">Grease Pencil</div>
<div class="a" style="left:844.3px;top:400.4px;width:160px;height:23.8px;background:linear-gradient(#c4c4c4,#a8a8a8);border-radius:5px;box-shadow:0 0 0 1px #262626"></div>
<div class="a" style="left:844.3px;top:400.4px;width:29.4px;height:23.8px;background:#3c3c3c;border-radius:5px 0 0 5px"></div>
<svg class="a" style="left:848px;top:402px;" width="16" height="20" viewBox="0 0 16 20"><path d="M2,18 L12,4" stroke="#222" stroke-width="4.5" stroke-linecap="round"/><path d="M2.5,17.5 L12,4.5" stroke="#8ac040" stroke-width="2.6"/><path d="M10.5,6.5 L13,3" stroke="#e04040" stroke-width="3"/></svg>
<svg class="a" style="left:864px;top:402px;" width="9" height="20" viewBox="0 0 9 20"><polygon points="1,8 8,8 4.5,2" fill="#bdbdbd"/><polygon points="1,11 8,11 4.5,17" fill="#bdbdbd"/></svg>
<svg class="a" style="left:877px;top:403px;" width="14" height="18" viewBox="0 0 14 18"><path d="M7,2 V16 M1,9 H13" stroke="#222" stroke-width="4"/><path d="M7,2.5 V15.5 M1.5,9 H12.5" stroke="#fff" stroke-width="2"/></svg>
<div class="t" style="left:932.00px;top:407.83px;font-size:13.66px;line-height:13.66px;color:#111;transform:scaleX(0.7702);">New</div>
<div class="a" style="left:844.3px;top:431.7px;width:160px;height:10px;background:linear-gradient(#c4c4c4,#a8a8a8);border-radius:5px;box-shadow:0 0 0 1px #262626"></div>
<div class="a" style="left:408px;top:437.5px;width:581px;height:459.5px;background:#e6e6e6"></div>
<svg class="a" style="left:408px;top:437.5px;" width="581" height="459.5" viewBox="0 0 581 459.5"><defs><linearGradient id="skin" x1="583" y1="0" x2="675" y2="0" gradientUnits="userSpaceOnUse"><stop offset="0" stop-color="#76584a"/><stop offset="0.25" stop-color="#937058"/><stop offset="0.55" stop-color="#86654f"/><stop offset="0.85" stop-color="#5e4434"/><stop offset="1" stop-color="#3e2c22"/></linearGradient><linearGradient id="armL" x1="0" y1="545" x2="0" y2="570" gradientUnits="userSpaceOnUse"><stop offset="0" stop-color="#88684e"/><stop offset="0.35" stop-color="#9c7c62"/><stop offset="0.75" stop-color="#6e503c"/><stop offset="1" stop-color="#3e2c20"/></linearGradient><linearGradient id="legs" x1="0" y1="690" x2="0" y2="870" gradientUnits="userSpaceOnUse"><stop offset="0" stop-color="#72543e" stop-opacity="0"/><stop offset="0.1" stop-color="#72543e"/><stop offset="0.8" stop-color="#72543f"/><stop offset="1" stop-color="#7a5c46"/></linearGradient><radialGradient id="hd" cx="45%" cy="30%" r="70%"><stop offset="0" stop-color="#b89078"/><stop offset="0.6" stop-color="#8e6a52"/><stop offset="1" stop-color="#5a3e2e"/></radialGradient><clipPath id="bodyclip"><path d="M617.0,524.0 C612.8,525.0 616.1,529.6 615.5,532.0 C614.9,534.4 615.4,537.0 613.5,538.5 C611.6,540.0 607.4,540.4 604.0,540.8 C600.6,541.2 597.9,540.7 593.0,541.0 C588.1,541.3 580.8,541.8 574.7,542.7 C568.6,543.6 562.9,545.6 556.5,546.4 C550.1,547.2 542.2,547.4 536.5,547.3 C530.8,547.1 529.3,545.4 522.0,545.5 C514.7,545.6 500.7,547.1 492.8,547.8 C484.9,548.5 480.7,549.2 474.6,549.7 C468.5,550.2 462.5,550.6 456.4,551.0 C450.3,551.4 442.9,551.6 438.2,552.2 C433.5,552.8 429.4,553.8 428.2,554.6 C427.0,555.5 427.8,556.6 431.0,557.3 C434.2,558.0 443.5,558.5 447.3,559.0 C451.1,559.5 454.0,558.8 454.0,560.0 C454.0,561.2 448.0,565.0 447.3,566.4 C446.6,567.8 446.7,569.2 450.0,568.2 C453.3,567.2 460.8,562.0 467.3,560.5 C473.8,559.0 478.7,559.1 489.0,559.5 C499.3,559.9 516.4,562.4 529.2,562.8 C542.0,563.2 555.6,561.9 565.6,561.9 C575.6,561.9 584.4,561.4 589.3,562.8 C594.1,564.1 593.5,566.3 594.7,570.0 C595.9,573.7 596.0,580.0 596.5,585.0 C597.0,590.0 597.6,594.8 598.0,600.0 C598.4,605.2 598.5,611.5 598.8,616.0 C599.1,620.5 600.6,622.8 600.0,626.8 C599.4,630.8 597.1,635.1 595.4,640.0 C593.7,644.9 591.6,650.8 590.0,656.2 C588.4,661.6 587.0,666.6 586.0,672.2 C585.0,677.8 584.2,683.7 583.8,690.0 C583.4,696.3 583.1,701.5 583.5,710.0 C583.9,718.5 585.5,732.4 586.0,740.7 C586.5,749.0 586.9,755.8 586.6,760.0 C586.3,764.2 585.4,762.3 584.4,766.0 C583.4,769.7 581.6,775.2 580.9,782.4 C580.2,789.6 580.1,801.2 580.0,809.2 C579.9,817.2 581.5,824.7 580.0,830.6 C578.5,836.5 573.5,840.4 571.0,844.9 C568.5,849.4 565.4,854.1 564.8,857.4 C564.2,860.7 565.6,862.9 567.5,864.5 C569.4,866.1 573.3,867.8 576.4,867.2 C579.5,866.6 584.0,864.3 586.2,860.9 C588.4,857.5 589.0,851.0 589.8,846.6 C590.5,842.2 590.0,840.4 590.7,834.2 C591.4,828.0 592.4,818.4 594.2,809.2 C596.0,800.0 599.2,787.1 601.4,778.9 C603.6,770.7 605.8,766.4 607.3,760.0 C608.8,753.6 608.9,746.5 610.3,740.7 C611.6,735.0 613.7,730.6 615.4,725.5 C617.1,720.4 619.2,715.3 620.4,710.3 C621.6,705.2 622.0,699.2 622.5,695.2 C623.0,691.2 622.7,687.9 623.5,686.5 C624.3,685.1 625.6,687.0 627.5,687.0 C629.4,687.0 633.1,685.1 634.6,686.5 C636.1,687.9 635.8,691.2 636.6,695.2 C637.5,699.2 638.2,705.2 639.7,710.3 C641.2,715.3 643.7,720.4 645.7,725.5 C647.7,730.6 649.8,735.0 651.8,740.7 C653.8,746.5 656.2,755.7 657.9,760.0 C659.6,764.3 660.1,761.8 662.0,766.4 C663.9,771.0 666.2,778.9 669.2,787.8 C672.2,796.7 677.8,811.9 679.9,819.9 C682.0,827.9 680.4,829.1 681.7,835.9 C683.0,842.7 685.8,855.8 687.9,860.9 C690.0,866.0 691.9,866.4 694.1,866.8 C696.3,867.2 699.8,865.4 701.3,863.5 C702.8,861.6 703.9,859.3 703.0,855.6 C702.1,851.9 698.0,846.1 695.9,841.3 C693.8,836.5 691.8,833.8 690.6,827.0 C689.4,820.2 690.0,809.2 688.8,800.3 C687.6,791.4 685.0,780.2 683.4,773.5 C681.8,766.8 680.1,765.5 679.0,760.0 C677.9,754.5 677.8,749.0 677.0,740.7 C676.2,732.4 675.0,720.4 674.0,710.3 C673.0,700.2 671.8,687.2 671.0,680.0 C670.2,672.8 670.2,671.9 669.0,667.0 C667.8,662.1 665.6,656.4 663.6,650.8 C661.6,645.2 658.3,638.5 657.0,633.4 C655.7,628.3 655.6,625.6 655.6,620.0 C655.6,614.4 656.3,605.8 657.0,600.0 C657.7,594.2 658.6,590.7 660.0,585.0 C661.4,579.3 662.3,569.6 665.2,566.0 C668.1,562.4 669.5,563.5 677.2,563.5 C684.9,563.5 701.6,565.0 711.6,566.0 C721.6,567.0 728.7,569.0 737.3,569.5 C745.9,570.0 755.0,568.4 763.0,568.7 C771.0,569.0 779.8,569.4 785.5,571.3 C791.2,573.1 794.9,578.7 797.5,579.8 C800.1,580.9 802.1,579.7 801.0,578.0 C799.9,576.3 791.2,570.8 790.6,569.5 C790.0,568.2 793.5,570.1 797.5,570.4 C801.5,570.7 811.0,571.6 814.7,571.3 C818.4,571.0 821.2,569.7 819.8,568.7 C818.3,567.7 812.6,566.7 806.0,565.2 C799.4,563.8 790.3,561.7 780.3,560.0 C770.3,558.3 756.0,556.1 746.0,555.0 C736.0,553.9 728.8,553.9 720.2,553.2 C711.6,552.5 701.6,551.9 694.4,550.6 C687.2,549.3 682.9,546.8 677.2,545.5 C671.5,544.2 664.8,543.6 660.0,542.9 C655.2,542.1 651.4,542.0 648.7,541.0 C646.0,540.0 645.3,539.5 644.0,537.0 C642.7,534.5 645.5,528.2 641.0,526.0 C636.5,523.8 621.2,523.0 617.0,524.0 Z"/></clipPath><filter id="bl" x="-50%" y="-50%" width="200%" height="200%"><feGaussianBlur stdDeviation="4"/></filter><filter id="bl2" x="-50%" y="-50%" width="200%" height="200%"><feGaussianBlur stdDeviation="2"/></filter></defs><g transform="translate(-408,-437.5)"><path d="M617.0,524.0 C612.8,525.0 616.1,529.6 615.5,532.0 C614.9,534.4 615.4,537.0 613.5,538.5 C611.6,540.0 607.4,540.4 604.0,540.8 C600.6,541.2 597.9,540.7 593.0,541.0 C588.1,541.3 580.8,541.8 574.7,542.7 C568.6,543.6 562.9,545.6 556.5,546.4 C550.1,547.2 542.2,547.4 536.5,547.3 C530.8,547.1 529.3,545.4 522.0,545.5 C514.7,545.6 500.7,547.1 492.8,547.8 C484.9,548.5 480.7,549.2 474.6,549.7 C468.5,550.2 462.5,550.6 456.4,551.0 C450.3,551.4 442.9,551.6 438.2,552.2 C433.5,552.8 429.4,553.8 428.2,554.6 C427.0,555.5 427.8,556.6 431.0,557.3 C434.2,558.0 443.5,558.5 447.3,559.0 C451.1,559.5 454.0,558.8 454.0,560.0 C454.0,561.2 448.0,565.0 447.3,566.4 C446.6,567.8 446.7,569.2 450.0,568.2 C453.3,567.2 460.8,562.0 467.3,560.5 C473.8,559.0 478.7,559.1 489.0,559.5 C499.3,559.9 516.4,562.4 529.2,562.8 C542.0,563.2 555.6,561.9 565.6,561.9 C575.6,561.9 584.4,561.4 589.3,562.8 C594.1,564.1 593.5,566.3 594.7,570.0 C595.9,573.7 596.0,580.0 596.5,585.0 C597.0,590.0 597.6,594.8 598.0,600.0 C598.4,605.2 598.5,611.5 598.8,616.0 C599.1,620.5 600.6,622.8 600.0,626.8 C599.4,630.8 597.1,635.1 595.4,640.0 C593.7,644.9 591.6,650.8 590.0,656.2 C588.4,661.6 587.0,666.6 586.0,672.2 C585.0,677.8 584.2,683.7 583.8,690.0 C583.4,696.3 583.1,701.5 583.5,710.0 C583.9,718.5 585.5,732.4 586.0,740.7 C586.5,749.0 586.9,755.8 586.6,760.0 C586.3,764.2 585.4,762.3 584.4,766.0 C583.4,769.7 581.6,775.2 580.9,782.4 C580.2,789.6 580.1,801.2 580.0,809.2 C579.9,817.2 581.5,824.7 580.0,830.6 C578.5,836.5 573.5,840.4 571.0,844.9 C568.5,849.4 565.4,854.1 564.8,857.4 C564.2,860.7 565.6,862.9 567.5,864.5 C569.4,866.1 573.3,867.8 576.4,867.2 C579.5,866.6 584.0,864.3 586.2,860.9 C588.4,857.5 589.0,851.0 589.8,846.6 C590.5,842.2 590.0,840.4 590.7,834.2 C591.4,828.0 592.4,818.4 594.2,809.2 C596.0,800.0 599.2,787.1 601.4,778.9 C603.6,770.7 605.8,766.4 607.3,760.0 C608.8,753.6 608.9,746.5 610.3,740.7 C611.6,735.0 613.7,730.6 615.4,725.5 C617.1,720.4 619.2,715.3 620.4,710.3 C621.6,705.2 622.0,699.2 622.5,695.2 C623.0,691.2 622.7,687.9 623.5,686.5 C624.3,685.1 625.6,687.0 627.5,687.0 C629.4,687.0 633.1,685.1 634.6,686.5 C636.1,687.9 635.8,691.2 636.6,695.2 C637.5,699.2 638.2,705.2 639.7,710.3 C641.2,715.3 643.7,720.4 645.7,725.5 C647.7,730.6 649.8,735.0 651.8,740.7 C653.8,746.5 656.2,755.7 657.9,760.0 C659.6,764.3 660.1,761.8 662.0,766.4 C663.9,771.0 666.2,778.9 669.2,787.8 C672.2,796.7 677.8,811.9 679.9,819.9 C682.0,827.9 680.4,829.1 681.7,835.9 C683.0,842.7 685.8,855.8 687.9,860.9 C690.0,866.0 691.9,866.4 694.1,866.8 C696.3,867.2 699.8,865.4 701.3,863.5 C702.8,861.6 703.9,859.3 703.0,855.6 C702.1,851.9 698.0,846.1 695.9,841.3 C693.8,836.5 691.8,833.8 690.6,827.0 C689.4,820.2 690.0,809.2 688.8,800.3 C687.6,791.4 685.0,780.2 683.4,773.5 C681.8,766.8 680.1,765.5 679.0,760.0 C677.9,754.5 677.8,749.0 677.0,740.7 C676.2,732.4 675.0,720.4 674.0,710.3 C673.0,700.2 671.8,687.2 671.0,680.0 C670.2,672.8 670.2,671.9 669.0,667.0 C667.8,662.1 665.6,656.4 663.6,650.8 C661.6,645.2 658.3,638.5 657.0,633.4 C655.7,628.3 655.6,625.6 655.6,620.0 C655.6,614.4 656.3,605.8 657.0,600.0 C657.7,594.2 658.6,590.7 660.0,585.0 C661.4,579.3 662.3,569.6 665.2,566.0 C668.1,562.4 669.5,563.5 677.2,563.5 C684.9,563.5 701.6,565.0 711.6,566.0 C721.6,567.0 728.7,569.0 737.3,569.5 C745.9,570.0 755.0,568.4 763.0,568.7 C771.0,569.0 779.8,569.4 785.5,571.3 C791.2,573.1 794.9,578.7 797.5,579.8 C800.1,580.9 802.1,579.7 801.0,578.0 C799.9,576.3 791.2,570.8 790.6,569.5 C790.0,568.2 793.5,570.1 797.5,570.4 C801.5,570.7 811.0,571.6 814.7,571.3 C818.4,571.0 821.2,569.7 819.8,568.7 C818.3,567.7 812.6,566.7 806.0,565.2 C799.4,563.8 790.3,561.7 780.3,560.0 C770.3,558.3 756.0,556.1 746.0,555.0 C736.0,553.9 728.8,553.9 720.2,553.2 C711.6,552.5 701.6,551.9 694.4,550.6 C687.2,549.3 682.9,546.8 677.2,545.5 C671.5,544.2 664.8,543.6 660.0,542.9 C655.2,542.1 651.4,542.0 648.7,541.0 C646.0,540.0 645.3,539.5 644.0,537.0 C642.7,534.5 645.5,528.2 641.0,526.0 C636.5,523.8 621.2,523.0 617.0,524.0 Z" fill="url(#armL)"/><g clip-path="url(#bodyclip)"><rect x="578" y="560" width="100" height="320" fill="url(#skin)"/><rect x="560" y="690" width="150" height="190" fill="url(#legs)"/><ellipse cx="618" cy="575" rx="24" ry="20" fill="#b89278" opacity="0.5" filter="url(#bl)"/><path d="M598,760 Q596,800 590,835 L600,780 Q605,760 610,742 Z" fill="#4e3628" opacity="0.5"/><path d="M667,700 Q672,760 688,805 L692,835 L700,845 Q690,790 682,760 Q677,720 675,690 Z" fill="#4a3326" opacity="0.6"/><path d="M584,700 Q590,740 592,760 L586,760 Z" fill="#8a6a52" opacity="0.5"/><ellipse cx="594" cy="767" rx="6" ry="5" fill="#8a6a54" opacity="0.6" filter="url(#bl2)"/><ellipse cx="668" cy="768" rx="6" ry="5" fill="#8a6a54" opacity="0.55" filter="url(#bl2)"/><ellipse cx="578" cy="852" rx="6" ry="5" fill="#8e6e58" opacity="0.6" filter="url(#bl2)"/><ellipse cx="691" cy="851" rx="5" ry="5" fill="#8e6e58" opacity="0.55" filter="url(#bl2)"/><path d="M662,556 Q740,565 818,569 L815,573 Q740,572 662,566 Z" fill="#6a4c3a" opacity="0.6"/><path d="M440,556 Q520,561 590,562 L590,566 Q520,565 445,560 Z" fill="#6a4c3a" opacity="0.4"/></g><path d="M627.9,476.0 C631.6,476.0 636.0,477.4 638.9,479.7 C641.8,481.9 643.6,486.4 645.0,489.5 C646.4,492.6 646.4,495.8 647.0,498.0 C647.6,500.2 648.7,500.3 648.7,503.0 C648.7,505.7 648.1,510.3 646.9,514.0 C645.7,517.7 643.4,522.2 641.3,525.0 C639.1,527.8 636.2,529.3 634.0,531.0 C631.8,532.7 630.1,535.0 627.9,535.0 C625.7,535.0 622.9,532.5 621.0,531.0 C619.1,529.5 618.5,529.1 616.8,526.3 C615.1,523.5 612.2,518.1 610.7,514.0 C609.2,509.9 607.8,504.8 607.6,501.8 C607.4,498.8 608.9,498.1 609.4,496.0 C609.9,493.9 609.5,492.2 610.7,489.5 C611.9,486.8 613.9,481.9 616.8,479.7 C619.7,477.4 624.2,476.0 627.9,476.0 Z" fill="url(#hd)"/><path d="M624,534 Q634,532 640.5,525 Q643,536 650,542 Q644,546 636,545 Q628,541 624,534 Z" fill="#22160f"/><ellipse cx="618.5" cy="508" rx="3.2" ry="1.8" fill="#e4eaee"/><ellipse cx="636.5" cy="508" rx="3.2" ry="1.8" fill="#e4eaee"/><path d="M623,525 Q628,523 633,525 Q628,528 623,525 Z" fill="#7a3a34"/><path d="M613,484 Q628,472 643,484 Q628,479 613,484 Z" fill="#d8d0cc" opacity="0.6"/><path d="M624,510 Q628,520 632,510 L630,518 Q628,521 626,518 Z" fill="#3a2a20" opacity="0.5"/><path d="M601.0,548.4 L615.6,543.5 L630.3,546.0 L631.5,550.9 L625.4,558.3 L610.7,558.3 Z" fill="#b0b3b5" opacity="0.9"/><path d="M634.0,550.0 L644.0,546.0 L655.0,545.0 L660.0,550.0 L657.0,558.0 L647.0,560.0 L638.0,556.0 Z" fill="#b0b3b5" opacity="0.9"/><path d="M619.0,537.0 L625.0,537.0 L629.0,546.0 L620.0,546.0 Z" fill="#b0b3b5" opacity="0.8"/><path d="M654.0,555.0 L660.0,553.0 L662.0,560.0 L657.0,563.0 Z" fill="#b0b3b5" opacity="0.8"/><ellipse cx="607.8" cy="591" rx="13.4" ry="14.3" fill="#9a7258"/><ellipse cx="645.3" cy="593" rx="13" ry="14" fill="#8a644e"/><path d="M595,597 Q607,610 621,598 Q612,606 600,603 Z" fill="#3a2820" opacity="0.6"/><path d="M633,600 Q645,612 658,600 Q650,609 638,606 Z" fill="#2a1c16" opacity="0.6"/><path d="M597.0,585.0 C597.8,583.0 601.2,579.3 604.0,578.0 C606.8,576.7 611.3,576.3 614.0,577.0 C616.7,577.7 618.8,579.5 620.0,582.0 C621.2,584.5 621.5,588.8 621.0,592.0 C620.5,595.2 618.8,599.0 617.0,601.0 C615.2,603.0 611.8,604.5 610.0,604.0 C608.2,603.5 606.2,600.3 606.0,598.0 C605.8,595.7 609.3,592.0 609.0,590.0 C608.7,588.0 605.7,586.0 604.0,586.0 C602.3,586.0 600.2,590.2 599.0,590.0 C597.8,589.8 596.2,587.0 597.0,585.0 Z" fill="#b0b3b5"/><path d="M635.0,586.0 C636.0,583.2 640.0,580.7 643.0,580.0 C646.0,579.3 650.5,580.3 653.0,582.0 C655.5,583.7 657.5,587.0 658.0,590.0 C658.5,593.0 657.5,597.5 656.0,600.0 C654.5,602.5 651.5,604.3 649.0,605.0 C646.5,605.7 643.0,605.3 641.0,604.0 C639.0,602.7 638.0,600.0 637.0,597.0 C636.0,594.0 634.0,588.8 635.0,586.0 Z" fill="#b0b3b5"/><path d="M643,585 Q646,595 645,603 L647,603 Q648,594 645,585 Z" fill="#8a6a56" opacity="0.7"/><path d="M607.5,605.4 L623.5,602.7 L626.2,606.7 L643.6,616.0 L639.6,633.4 L641.0,656.2 L635.6,665.5 L626.2,669.6 L614.1,672.9 L608.8,680.3 L606.1,656.2 L608.8,637.5 Z" fill="#b0b3b5"/><ellipse cx="624" cy="650" rx="9" ry="12" fill="#c2c4c6" opacity="0.6"/><path d="M596.8,637.5 L600.8,640.0 L604.0,653.5 L600.0,665.0 L598.8,675.0 L593.0,668.0 L594.0,650.0 Z" fill="#b0b3b5" opacity="0.7"/><path d="M590.0,680.0 L605.3,680.0 L605.3,696.7 L590.0,693.0 Z" fill="#b0b3b5"/><path d="M641.7,684.0 L662.9,681.0 L665.0,693.0 L642.7,698.2 Z" fill="#b0b3b5"/><path d="M664.0,668.0 L668.0,672.0 L669.0,680.0 L664.0,678.0 Z" fill="#b0b3b5" opacity="0.7"/></g></svg>
</body></html>
